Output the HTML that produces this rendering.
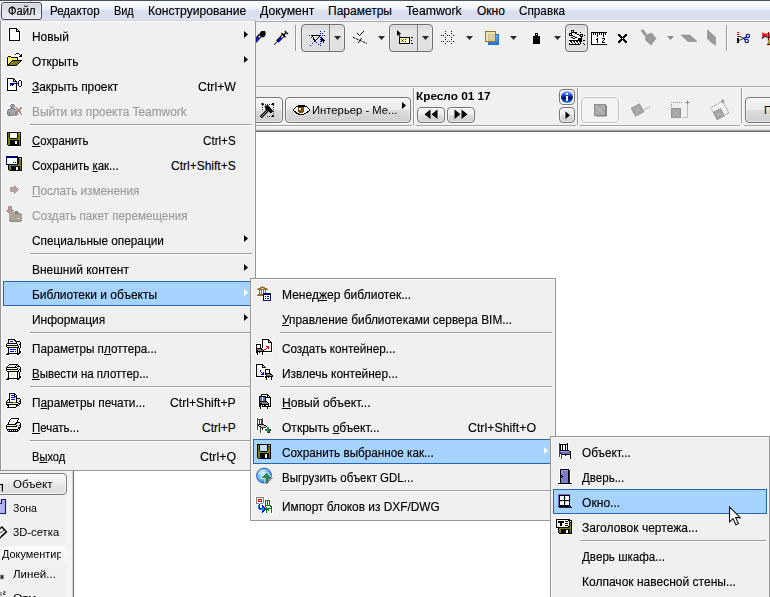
<!DOCTYPE html>
<html><head><meta charset="utf-8"><title>ArchiCAD</title>
<style>
*{box-sizing:border-box;margin:0;padding:0}
html,body{width:770px;height:597px;overflow:hidden}
body{position:relative;background:#f0f0f0;font-family:"Liberation Sans",sans-serif;font-size:12px;color:#000}
.abs{position:absolute}
.t{-webkit-text-stroke:0.15px currentColor;position:absolute;display:inline-block;white-space:nowrap;transform-origin:0 50%;line-height:27px;height:25px}
.t u{text-decoration:underline;text-underline-offset:1px}
.dis{color:#9a9a9a}
#topline{left:0;top:0;width:770px;height:1px;background:#44546a}
#menubar{left:0;top:1px;width:770px;height:20px;background:linear-gradient(#ffffff 0%,#fbfcfe 12%,#eef1f9 38%,#e3e7f4 46%,#d9deef 54%,#dbe0f0 100%)}
#menubar .t{line-height:20px;height:20px;top:0}
#filebtn{left:1px;top:2px;width:41px;height:18px;border:1px solid #454a55;border-radius:3px;background:linear-gradient(#d3d6df,#e2e4ec 60%,#e6e8ef);box-shadow:inset 0 0 0 1px rgba(255,255,255,.35)}
.menu{background:#f0f0f0;border:1px solid #979797;box-shadow:inset 1px 1px 0 #f8f8f8}
.sep{position:absolute;height:2px;background:#a0a0a0;border-bottom:1px solid #fbfbfb}
.hl{position:absolute;border:1px solid #2566b8;background:#a6d2fe}
.arr{position:absolute;width:4px;height:7px;background:#000;clip-path:polygon(0 0,100% 50%,0 100%)}
.arr.w{background:#fff}
.icon{position:absolute}
#canvas{left:74px;top:132px;width:696px;height:465px;background:#fff}
.tbtn{position:absolute;border:1px solid #767676;border-radius:4px;background:linear-gradient(#f4f4f4 0%,#ececec 48%,#dcdcdc 52%,#cecece 100%);box-shadow:inset 0 0 0 1px rgba(255,255,255,.55),0 1px 0 #fbfbfb}
.tah{font-size:11px;-webkit-text-stroke:0}
.halo{filter:drop-shadow(1px 0 0 #fff) drop-shadow(-1px 0 0 #fff) drop-shadow(0 1px 0 #fff) drop-shadow(0 -1px 0 #fff)}
.vsep{width:2px;border-left:1px solid #9a9a9a;border-right:1px solid #fbfbfb}
.tbtn2{position:absolute;border:1px solid #6f6f6f;border-radius:4px;background:linear-gradient(#d6d6d6 0%,#e7e7e7 25%,#e3e3e3 50%,#dcdcdc 100%);box-shadow:inset 0 0 0 1px rgba(255,255,255,.25)}
.darr{position:absolute;width:7px;height:4px;background:#2a2a2a;clip-path:polygon(0 0,100% 0,50% 100%)}

</style></head>
<body>
<div class="abs" id="topline"></div>
<div class="abs" id="menubar">
  <div class="abs" id="filebtn" style="top:1px"></div>
  <span class="t" style="transform:scaleX(0.9333);left:8px">Файл</span>
  <span class="t" style="transform:scaleX(0.9615);left:50px">Редактор</span>
  <span class="t" style="transform:scaleX(0.9091);left:114px">Вид</span>
  <span class="t" style="transform:scaleX(1.0103);left:148px">Конструирование</span>
  <span class="t" style="transform:scaleX(1.0189);left:260px">Документ</span>
  <span class="t" style="transform:scaleX(1.0000);left:328px">Параметры</span>
  <span class="t" style="transform:scaleX(1.0182);left:406px">Teamwork</span>
  <span class="t" style="transform:scaleX(1.0000);left:477px">Окно</span>
  <span class="t" style="transform:scaleX(0.9787);left:519px">Справка</span>
</div>
<div class="abs" id="tb1" style="left:0;top:22px;width:770px;height:106px;background:#f0f0f0"></div>
<div class="abs" style="left:256px;top:86px;width:514px;height:1px;background:#a6a6a6"></div>
<div class="abs" style="left:256px;top:87px;width:514px;height:1px;background:#fbfbfb"></div>
<div class="abs" style="left:256px;top:125px;width:514px;height:1px;background:#a6a6a6"></div>
<div class="abs" style="left:256px;top:126px;width:514px;height:1px;background:#fbfbfb"></div>
<div class="abs" style="left:0px;top:129px;width:770px;height:1px;background:#dadada"></div>
<div class="abs" style="left:0px;top:130px;width:770px;height:1px;background:#a6a6a6"></div>
<div class="abs" style="left:0px;top:131px;width:770px;height:1px;background:#6c6c6c"></div>
<div class="abs" id="canvas"></div>

<!-- toolbar row 1 buttons -->
<div class="abs" style="left:0;top:20px;width:770px;height:1px;background:#f6f7fb"></div>
<div class="abs" style="left:0;top:21px;width:770px;height:1px;background:#a9a9a9"></div>
<div class="abs vsep" style="left:295px;top:25px;height:26px"></div>
<div class="abs vsep" style="left:726px;top:25px;height:26px"></div>
<div class="tbtn2" style="left:301px;top:24px;width:44px;height:28px"></div>
<div class="abs" style="left:329px;top:25px;width:1px;height:26px;background:#7a7a7a"></div>
<div class="abs" style="left:330px;top:25px;width:1px;height:26px;background:#ececec"></div>
<div class="tbtn2" style="left:389px;top:24px;width:44px;height:28px"></div>
<div class="abs" style="left:417px;top:25px;width:1px;height:26px;background:#7a7a7a"></div>
<div class="abs" style="left:418px;top:25px;width:1px;height:26px;background:#ececec"></div>
<div class="tbtn2" style="left:565px;top:24px;width:23px;height:28px"></div>
<div class="darr" style="left:334px;top:36px"></div>
<div class="darr" style="left:378px;top:36px"></div>
<div class="darr" style="left:422px;top:36px"></div>
<div class="darr" style="left:466px;top:36px"></div>
<div class="darr" style="left:510px;top:36px"></div>
<div class="darr" style="left:554px;top:36px"></div>
<div class="darr" style="left:667px;top:36px;background:#8c8c8c"></div>
<!-- toolbar row 2 -->
<div class="tbtn" style="left:240px;top:97px;width:43px;height:26px"></div>
<div class="tbtn" style="left:285px;top:97px;width:126px;height:26px"></div>
<div class="arr" style="left:402px;top:102px"></div>
<div class="abs vsep" style="left:413px;top:88px;height:37px"></div>
<div class="abs vsep" style="left:577px;top:88px;height:37px"></div>
<div class="abs vsep" style="left:741px;top:88px;height:35px"></div>
<div class="tbtn" style="left:417px;top:107px;width:28px;height:16px"></div>
<div class="tbtn" style="left:447px;top:107px;width:28px;height:16px"></div>
<div class="tbtn" style="left:559px;top:89px;width:16px;height:16px;background:#f8f8f8"></div>
<div class="tbtn" style="left:559px;top:107px;width:16px;height:16px"></div>
<div class="abs" style="left:581px;top:97px;width:38px;height:26px;border:1px solid #bfc4cc;border-radius:4px;background:#f3f3f3;box-shadow:0 0 0 1px #fafafa"></div>
<div class="tbtn" style="left:745px;top:97px;width:40px;height:26px"></div>
<span class="t tah" style="transform:scaleX(1.0241);left:312px;top:97px;line-height:26px;height:26px;color:#000">Интерьер - Ме...</span>
<span class="t tah" style="transform:scaleX(1.0714);left:416px;top:86px;line-height:21px;height:20px;font-weight:bold">Кресло 01 17</span>
<span class="t tah" style="transform:scaleX(1.0000);left:764px;top:97px;line-height:26px;height:26px">П</span>
<svg class="abs" style="left:256px;top:22px" width="514" height="106" viewBox="256 22 514 106">
<!-- pipette -->
<g>
<path d="M259.5 33.5 l2 -2.5 l3.5 0 l0.8 3 l-1.5 3 l-2.5 0.5 z" fill="#000"/>
<path d="M260.5 35 L255 41.5" stroke="#000" stroke-width="4"/>
<path d="M260 36 L255.5 41" stroke="#fff" stroke-width="1.6"/>
<path d="M258.8 37.2 L255 41.5" stroke="#0000ff" stroke-width="1.8"/>
</g>
<!-- syringe -->
<g fill="none" stroke="#000" stroke-width="1">
<path d="M274 44.8 L277.5 41.5"/>
<path d="M277.3 41.6 L284 34.6" stroke-width="3.4"/>
<path d="M278 41 L281 37.8" stroke="#0000ff" stroke-width="1.8"/>
<path d="M281.3 37.6 L283.5 35.2" stroke="#fff" stroke-width="1.4"/>
<path d="M281.5 33 L285.5 37.5 M283.3 35.2 L286.5 32.3 M284.8 30.8 L288 34.2" stroke-width="1.2"/>
</g>
<!-- check / dashed line icon -->
<g fill="none" stroke="#000" stroke-width="1">
<path d="M357 33 L359.5 35.5 L364 31"/>
<path d="M353 37.3 L367 43.5" stroke-dasharray="2.5 1"/>
<path d="M358.3 42.8 L361.6 38.2"/>
</g>
<!-- button B icon -->
<g>
<path d="M397 30 l0 6 l1.4 -1.3 l1.1 2.2 l1 -0.5 l-1.1 -2.1 l1.9 -0.2 z" fill="#000"/>
<rect x="399.5" y="37.5" width="10" height="6" fill="#ffffc0" stroke="#000" stroke-width="1"/>
<path d="M401.5 39.5 l2 2 m0 -2 l-2 2 M405.5 39 v1 M405.5 41 v1" stroke="#000" stroke-width="0.9"/>
<path d="M411 37.5 h2 M411 40.5 h1 M411 43.5 h2" stroke="#000" stroke-width="1"/>
</g>
<!-- grid icon -->
<g fill="none" stroke="#0000c0" stroke-width="1" stroke-dasharray="1 1">
<path d="M445.5 31 V45 M451.5 31 V45 M441 35.5 H455 M441 41.5 H455"/>
</g>
<g fill="#e8e000"><rect x="445" y="35" width="1" height="1"/><rect x="451" y="35" width="1" height="1"/><rect x="445" y="41" width="1" height="1"/><rect x="451" y="41" width="1" height="1"/></g>
<!-- layers icon -->
<defs><linearGradient id="lb" x1="0" y1="0" x2="0" y2="1"><stop offset="0" stop-color="#6aaef0"/><stop offset="1" stop-color="#2a74d0"/></linearGradient></defs>
<rect x="488.5" y="34.5" width="10" height="10" fill="url(#lb)" stroke="#2a6cc0"/>
<rect x="485.5" y="31.5" width="10" height="10" fill="#f8dc90" fill-opacity="0.8" stroke="#9a7424"/>
<!-- gray icons -->
<g fill="#9a9a9e" stroke="#8c8c8c" stroke-width="0.6">
<path d="M645.5 35.5 L651.5 33 L656 38.5 L651 45 L645.5 40 Z"/>
<path d="M641 30.5 l2 -1 l3.5 4.5 l-2 1.5 z"/>
<path d="M681 35 L690 35 L697 41.5 L688 41.5 Z"/>
<path d="M707.5 30 L715.5 37 L715.5 45.5 L707.5 39 Z"/>
</g>
<!-- scissors icon -->
<g fill="none">
<rect x="737" y="32" width="2" height="1" fill="#ff0000"/><rect x="737" y="34" width="2" height="1" fill="#ff0000"/>
<rect x="737" y="38" width="2" height="5" fill="#000"/>
<path d="M737.3 36.4 L741 36.8 L744 38.6 M739 40.5 L744 38.2" stroke="#303030" stroke-width="1"/>
<path d="M743.5 38.4 L746.5 37.2 M743.5 38.4 L745.2 39.6" stroke="#000090" stroke-width="1.2"/>
<circle cx="747.8" cy="35.9" r="1.7" stroke="#000098" stroke-width="1.1"/><circle cx="746.7" cy="41" r="1.7" stroke="#000098" stroke-width="1.1"/>
</g>
<!-- red icon partially visible -->
<g>
<path d="M762.3 32.3 L765.5 34 L767.5 33 V36.5 L765.5 35.8 L762.3 37.2 Z" fill="#ff0000"/>
<path d="M768.5 32 V45" stroke="#8a0000" stroke-width="1.2"/>
<path d="M769.5 33 V38" stroke="#8a8a8a" stroke-width="1"/>
<path d="M762 38.6 Q764 36 766 36.6 L770 37.6" stroke="#000" stroke-width="1.1" fill="none"/>
<path d="M768.8 40 v3.5" stroke="#8a9a20" stroke-width="1.6"/>
<path d="M767 44.5 h3" stroke="#7a0000" stroke-width="1.2"/>
</g>
<!-- ROW 2 -->
<!-- hammer icon -->
<g>
<path d="M263 104.5 H273 M273.5 105 V116 M262.5 105 V111 M267 116.5 H273" fill="none" stroke="#3a3a3a" stroke-width="1" stroke-dasharray="1 1"/>
<rect x="261.5" y="103" width="2" height="2" fill="#000"/><rect x="272" y="103" width="2" height="2" fill="#000"/><rect x="272" y="115" width="2" height="2" fill="#000"/>
<path d="M260.8 117.2 L267.5 110.5" stroke="#000" stroke-width="3"/>
<path d="M261.2 116.8 L267 111" stroke="#a8a8a8" stroke-width="1"/>
<path d="M264.5 106 l3.5 -1 l5.3 6.2 l-2.6 2.4 l-3 -3.4 l-1.7 0.6 z" fill="#000"/>
</g>
<!-- nav arrows -->
<path d="M430.5 109.5 v9.5 l-6 -4.75 z M437.5 109.5 v9.5 l-6 -4.75 z" fill="#000"/>
<path d="M454.5 109.5 v9.5 l6 -4.75 z M461.5 109.5 v9.5 l6 -4.75 z" fill="#000"/>
<path d="M565.5 111.5 v7.5 l4.5 -3.75 z" fill="#000"/>
<!-- info icon -->
<defs><linearGradient id="ig" x1="0" y1="0" x2="0" y2="1"><stop offset="0" stop-color="#86b6fa"/><stop offset="0.32" stop-color="#2c58e2"/><stop offset="0.55" stop-color="#000c64"/><stop offset="0.8" stop-color="#0a3cbc"/><stop offset="1" stop-color="#3c94f2"/></linearGradient></defs>
<circle cx="567" cy="97" r="6" fill="url(#ig)"/>
<rect x="566" y="93" width="2" height="2" fill="#fff"/><rect x="566" y="96" width="2" height="5" fill="#fff"/>
<!-- disabled big button icon -->
<rect x="594.5" y="104.5" width="11" height="11" fill="#a9a9a9" stroke="#8e8e8e"/>
<path d="M596 106 l8 8 m0 -8 l-8 8" stroke="#c4c4c4" stroke-width="0.9"/>
<path d="M606.5 105.5 v10.5 h-10.5" stroke="#808080" fill="none"/>
<!-- gray rotated boxes -->
<g transform="rotate(-28 637.5 110)"><rect x="633" y="105.5" width="9" height="9" fill="#a4a4a4" stroke="#969696"/><path d="M634.5 107 l6 6 m0 -6 l-6 6" stroke="#b8b8b8" stroke-width="0.8"/><path d="M643 113 h7" stroke="#8a8a8a" stroke-dasharray="1 1"/></g>
<g><rect x="671.5" y="108.5" width="9" height="9" fill="#a4a4a4" stroke="#969696"/><path d="M673 110 l6 6 m0 -6 l-6 6" stroke="#b8b8b8" stroke-width="0.8"/>
<path d="M671.5 107 V102.5 H683 M687.5 105.5 V117.5 H682" fill="none" stroke="#8a8a8a" stroke-dasharray="1 1"/><path d="M685.5 102.5 h4 M687.5 100.5 v4" stroke="#8a8a8a"/></g>
<g transform="translate(0.8 1) rotate(-28 718 112)"><rect x="713.5" y="109" width="8" height="8" fill="#a4a4a4" stroke="#969696"/><path d="M715 110.5 l5 5 m0 -5 l-5 5" stroke="#b8b8b8" stroke-width="0.8"/>
<path d="M713.5 108 V103.5 H727 V116.5 H723" fill="none" stroke="#8a8a8a" stroke-dasharray="1 1"/><path d="M725 103.5 h4 M727 101.5 v4" stroke="#8a8a8a"/></g>
</svg>

<svg class="icon" style="left:308px;top:30px" width="17" height="16" viewBox="0 0 17 16" shape-rendering="crispEdges"><rect x="12" y="1" width="1" height="1" fill="#0000ff"/><rect x="16" y="1" width="1" height="1" fill="#0000ff"/><rect x="12" y="3" width="1" height="1" fill="#0000ff"/><rect x="14" y="3" width="1" height="1" fill="#0000ff"/><rect x="1" y="5" width="1" height="1" fill="#0000ff"/><rect x="3" y="5" width="1" height="1" fill="#0000ff"/><rect x="4" y="5" width="9" height="1" fill="#000000"/><rect x="14" y="5" width="1" height="1" fill="#0000ff"/><rect x="16" y="5" width="1" height="1" fill="#0000ff"/><rect x="4" y="6" width="1" height="1" fill="#000000"/><rect x="11" y="6" width="1" height="1" fill="#000000"/><rect x="3" y="7" width="1" height="1" fill="#0000ff"/><rect x="5" y="7" width="1" height="1" fill="#000000"/><rect x="10" y="7" width="1" height="1" fill="#000000"/><rect x="12" y="7" width="1" height="1" fill="#0000ff"/><rect x="13" y="7" width="1" height="1" fill="#000000"/><rect x="5" y="8" width="1" height="1" fill="#000000"/><rect x="9" y="8" width="1" height="1" fill="#000000"/><rect x="13" y="8" width="2" height="1" fill="#000000"/><rect x="5" y="9" width="1" height="1" fill="#0000ff"/><rect x="6" y="9" width="1" height="1" fill="#000000"/><rect x="8" y="9" width="1" height="1" fill="#000000"/><rect x="12" y="9" width="1" height="1" fill="#0000ff"/><rect x="13" y="9" width="3" height="1" fill="#000000"/><rect x="6" y="10" width="2" height="1" fill="#000000"/><rect x="13" y="10" width="4" height="1" fill="#000000"/><rect x="6" y="11" width="2" height="1" fill="#0000ff"/><rect x="12" y="11" width="1" height="1" fill="#0000ff"/><rect x="13" y="11" width="1" height="1" fill="#000000"/><rect x="15" y="11" width="1" height="1" fill="#000000"/><rect x="8" y="12" width="1" height="1" fill="#0000ff"/><rect x="15" y="12" width="1" height="1" fill="#000000"/><rect x="4" y="13" width="1" height="1" fill="#0000ff"/><rect x="12" y="13" width="1" height="1" fill="#0000ff"/><rect x="10" y="14" width="1" height="1" fill="#0000ff"/><rect x="2" y="15" width="1" height="1" fill="#0000ff"/><rect x="12" y="15" width="1" height="1" fill="#0000ff"/></svg>
<svg class="icon" style="left:618px;top:34px" width="9" height="9" viewBox="0 0 9 9" shape-rendering="crispEdges"><rect x="0" y="0" width="2" height="1" fill="#000000"/><rect x="7" y="0" width="2" height="1" fill="#000000"/><rect x="0" y="1" width="3" height="1" fill="#000000"/><rect x="6" y="1" width="3" height="1" fill="#000000"/><rect x="1" y="2" width="3" height="1" fill="#000000"/><rect x="5" y="2" width="3" height="1" fill="#000000"/><rect x="2" y="3" width="5" height="1" fill="#000000"/><rect x="3" y="4" width="1" height="1" fill="#000000"/><rect x="5" y="4" width="1" height="1" fill="#000000"/><rect x="2" y="5" width="5" height="1" fill="#000000"/><rect x="1" y="6" width="3" height="1" fill="#000000"/><rect x="5" y="6" width="3" height="1" fill="#000000"/><rect x="0" y="7" width="3" height="1" fill="#000000"/><rect x="6" y="7" width="3" height="1" fill="#000000"/><rect x="0" y="8" width="2" height="1" fill="#000000"/><rect x="7" y="8" width="2" height="1" fill="#000000"/></svg>
<svg class="icon" style="left:533px;top:33px" width="7" height="11" viewBox="0 0 7 11" shape-rendering="crispEdges"><rect x="2" y="0" width="3" height="1" fill="#000000"/><rect x="2" y="1" width="1" height="1" fill="#000000"/><rect x="4" y="1" width="1" height="1" fill="#000000"/><rect x="2" y="2" width="3" height="1" fill="#000000"/><rect x="0" y="3" width="7" height="1" fill="#000000"/><rect x="0" y="4" width="7" height="1" fill="#000000"/><rect x="0" y="5" width="7" height="1" fill="#000000"/><rect x="0" y="6" width="7" height="1" fill="#000000"/><rect x="0" y="7" width="7" height="1" fill="#000000"/><rect x="0" y="8" width="7" height="1" fill="#000000"/><rect x="0" y="9" width="7" height="1" fill="#000000"/><rect x="0" y="10" width="7" height="1" fill="#000000"/></svg>
<svg class="icon" style="left:566px;top:28px" width="22" height="17" viewBox="0 0 22 17" shape-rendering="crispEdges"><rect x="5" y="2" width="3" height="1" fill="#000000"/><rect x="5" y="3" width="1" height="1" fill="#000000"/><rect x="6" y="3" width="1" height="1" fill="#ffffff"/><rect x="7" y="3" width="1" height="1" fill="#000000"/><rect x="5" y="4" width="6" height="1" fill="#000000"/><rect x="14" y="4" width="1" height="1" fill="#000000"/><rect x="3" y="5" width="3" height="1" fill="#000000"/><rect x="6" y="5" width="3" height="1" fill="#ffffff"/><rect x="9" y="5" width="2" height="1" fill="#000000"/><rect x="3" y="6" width="1" height="1" fill="#000000"/><rect x="4" y="6" width="1" height="1" fill="#ffffff"/><rect x="5" y="6" width="1" height="1" fill="#000000"/><rect x="6" y="6" width="5" height="1" fill="#ffffff"/><rect x="11" y="6" width="2" height="1" fill="#000000"/><rect x="14" y="6" width="3" height="1" fill="#000000"/><rect x="3" y="7" width="4" height="1" fill="#000000"/><rect x="7" y="7" width="6" height="1" fill="#ffffff"/><rect x="13" y="7" width="2" height="1" fill="#000000"/><rect x="15" y="7" width="1" height="1" fill="#ffffff"/><rect x="16" y="7" width="1" height="1" fill="#000000"/><rect x="18" y="7" width="1" height="1" fill="#000000"/><rect x="7" y="8" width="2" height="1" fill="#000000"/><rect x="9" y="8" width="5" height="1" fill="#ffffff"/><rect x="14" y="8" width="3" height="1" fill="#000000"/><rect x="5" y="9" width="2" height="1" fill="#000000"/><rect x="9" y="9" width="2" height="1" fill="#000000"/><rect x="11" y="9" width="4" height="1" fill="#ffffff"/><rect x="15" y="9" width="1" height="1" fill="#000000"/><rect x="7" y="10" width="2" height="1" fill="#000000"/><rect x="12" y="10" width="4" height="1" fill="#000000"/><rect x="3" y="11" width="9" height="1" fill="#ffffff"/><rect x="12" y="11" width="4" height="1" fill="#000000"/><rect x="3" y="12" width="13" height="1" fill="#000000"/><rect x="17" y="12" width="2" height="1" fill="#000000"/><rect x="3" y="13" width="1" height="1" fill="#ffffff"/><rect x="4" y="13" width="2" height="1" fill="#000000"/><rect x="6" y="13" width="1" height="1" fill="#ffffff"/><rect x="7" y="13" width="2" height="1" fill="#000000"/><rect x="9" y="13" width="1" height="1" fill="#ffffff"/><rect x="10" y="13" width="2" height="1" fill="#000000"/><rect x="12" y="13" width="1" height="1" fill="#ffffff"/><rect x="13" y="13" width="3" height="1" fill="#000000"/><rect x="3" y="14" width="2" height="1" fill="#ffffff"/><rect x="5" y="14" width="1" height="1" fill="#000000"/><rect x="6" y="14" width="2" height="1" fill="#ffffff"/><rect x="8" y="14" width="1" height="1" fill="#000000"/><rect x="9" y="14" width="2" height="1" fill="#ffffff"/><rect x="11" y="14" width="1" height="1" fill="#000000"/><rect x="12" y="14" width="2" height="1" fill="#ffffff"/><rect x="14" y="14" width="1" height="1" fill="#000000"/><rect x="3" y="15" width="1" height="1" fill="#000000"/><rect x="4" y="15" width="2" height="1" fill="#ffffff"/><rect x="6" y="15" width="1" height="1" fill="#000000"/><rect x="7" y="15" width="2" height="1" fill="#ffffff"/><rect x="9" y="15" width="1" height="1" fill="#000000"/><rect x="10" y="15" width="2" height="1" fill="#ffffff"/><rect x="12" y="15" width="1" height="1" fill="#000000"/><rect x="13" y="15" width="1" height="1" fill="#ffffff"/><rect x="14" y="15" width="1" height="1" fill="#000000"/><rect x="17" y="15" width="1" height="1" fill="#000000"/><rect x="3" y="16" width="11" height="1" fill="#000000"/><rect x="18" y="16" width="1" height="1" fill="#000000"/></svg>
<svg class="icon" style="left:591px;top:32px" width="16" height="13" viewBox="0 0 16 13" shape-rendering="crispEdges"><rect x="0" y="0" width="16" height="1" fill="#000000"/><rect x="0" y="1" width="1" height="1" fill="#000000"/><rect x="1" y="1" width="1" height="1" fill="#ffffff"/><rect x="2" y="1" width="1" height="1" fill="#000000"/><rect x="3" y="1" width="1" height="1" fill="#ffffff"/><rect x="4" y="1" width="1" height="1" fill="#000000"/><rect x="5" y="1" width="1" height="1" fill="#ffffff"/><rect x="6" y="1" width="1" height="1" fill="#000000"/><rect x="7" y="1" width="1" height="1" fill="#ffffff"/><rect x="8" y="1" width="1" height="1" fill="#000000"/><rect x="9" y="1" width="1" height="1" fill="#ffffff"/><rect x="10" y="1" width="1" height="1" fill="#000000"/><rect x="11" y="1" width="1" height="1" fill="#ffffff"/><rect x="12" y="1" width="1" height="1" fill="#000000"/><rect x="13" y="1" width="1" height="1" fill="#ffffff"/><rect x="14" y="1" width="1" height="1" fill="#000000"/><rect x="15" y="1" width="1" height="1" fill="#ffffff"/><rect x="0" y="2" width="1" height="1" fill="#000000"/><rect x="1" y="2" width="1" height="1" fill="#ffffff"/><rect x="2" y="2" width="1" height="1" fill="#000000"/><rect x="3" y="2" width="1" height="1" fill="#ffffff"/><rect x="4" y="2" width="1" height="1" fill="#000000"/><rect x="5" y="2" width="1" height="1" fill="#ffffff"/><rect x="6" y="2" width="1" height="1" fill="#000000"/><rect x="7" y="2" width="1" height="1" fill="#ffffff"/><rect x="8" y="2" width="1" height="1" fill="#000000"/><rect x="9" y="2" width="1" height="1" fill="#ffffff"/><rect x="10" y="2" width="1" height="1" fill="#000000"/><rect x="11" y="2" width="1" height="1" fill="#ffffff"/><rect x="12" y="2" width="1" height="1" fill="#000000"/><rect x="13" y="2" width="1" height="1" fill="#ffffff"/><rect x="14" y="2" width="1" height="1" fill="#000000"/><rect x="15" y="2" width="1" height="1" fill="#ffffff"/><rect x="0" y="3" width="1" height="1" fill="#000000"/><rect x="1" y="3" width="5" height="1" fill="#ffffff"/><rect x="6" y="3" width="1" height="1" fill="#000000"/><rect x="7" y="3" width="5" height="1" fill="#ffffff"/><rect x="12" y="3" width="1" height="1" fill="#000000"/><rect x="13" y="3" width="3" height="1" fill="#ffffff"/><rect x="0" y="4" width="1" height="1" fill="#000000"/><rect x="1" y="4" width="5" height="1" fill="#ffffff"/><rect x="6" y="4" width="1" height="1" fill="#000000"/><rect x="7" y="4" width="5" height="1" fill="#ffffff"/><rect x="12" y="4" width="1" height="1" fill="#000000"/><rect x="13" y="4" width="3" height="1" fill="#ffffff"/><rect x="0" y="5" width="1" height="1" fill="#000000"/><rect x="1" y="5" width="15" height="1" fill="#ffffff"/><rect x="0" y="6" width="1" height="1" fill="#000000"/><rect x="1" y="6" width="5" height="1" fill="#ffffff"/><rect x="6" y="6" width="1" height="1" fill="#000000"/><rect x="7" y="6" width="4" height="1" fill="#ffffff"/><rect x="11" y="6" width="3" height="1" fill="#000000"/><rect x="14" y="6" width="2" height="1" fill="#ffffff"/><rect x="0" y="7" width="1" height="1" fill="#000000"/><rect x="1" y="7" width="4" height="1" fill="#ffffff"/><rect x="5" y="7" width="2" height="1" fill="#000000"/><rect x="7" y="7" width="6" height="1" fill="#ffffff"/><rect x="13" y="7" width="1" height="1" fill="#000000"/><rect x="14" y="7" width="2" height="1" fill="#ffffff"/><rect x="0" y="8" width="1" height="1" fill="#000000"/><rect x="1" y="8" width="5" height="1" fill="#ffffff"/><rect x="6" y="8" width="1" height="1" fill="#000000"/><rect x="7" y="8" width="5" height="1" fill="#ffffff"/><rect x="12" y="8" width="1" height="1" fill="#000000"/><rect x="13" y="8" width="3" height="1" fill="#ffffff"/><rect x="0" y="9" width="1" height="1" fill="#000000"/><rect x="1" y="9" width="5" height="1" fill="#ffffff"/><rect x="6" y="9" width="1" height="1" fill="#000000"/><rect x="7" y="9" width="4" height="1" fill="#ffffff"/><rect x="11" y="9" width="1" height="1" fill="#000000"/><rect x="12" y="9" width="4" height="1" fill="#ffffff"/><rect x="0" y="10" width="1" height="1" fill="#000000"/><rect x="1" y="10" width="5" height="1" fill="#ffffff"/><rect x="6" y="10" width="1" height="1" fill="#000000"/><rect x="7" y="10" width="4" height="1" fill="#ffffff"/><rect x="11" y="10" width="3" height="1" fill="#000000"/><rect x="14" y="10" width="2" height="1" fill="#ffffff"/><rect x="0" y="11" width="1" height="1" fill="#000000"/><rect x="1" y="11" width="15" height="1" fill="#ffffff"/><rect x="0" y="12" width="16" height="1" fill="#000000"/></svg>
<svg class="icon" style="left:293px;top:105px" width="17" height="10" viewBox="0 0 17 10" shape-rendering="crispEdges"><rect x="5" y="0" width="7" height="1" fill="#000000"/><rect x="3" y="1" width="11" height="1" fill="#000000"/><rect x="2" y="2" width="1" height="1" fill="#000000"/><rect x="3" y="2" width="2" height="1" fill="#ffffff"/><rect x="5" y="2" width="6" height="1" fill="#7a4a08"/><rect x="11" y="2" width="3" height="1" fill="#ffffff"/><rect x="14" y="2" width="1" height="1" fill="#000000"/><rect x="1" y="3" width="1" height="1" fill="#000000"/><rect x="2" y="3" width="3" height="1" fill="#ffffff"/><rect x="5" y="3" width="1" height="1" fill="#7a4a08"/><rect x="6" y="3" width="2" height="1" fill="#ffffff"/><rect x="8" y="3" width="3" height="1" fill="#7a4a08"/><rect x="11" y="3" width="4" height="1" fill="#ffffff"/><rect x="15" y="3" width="1" height="1" fill="#000000"/><rect x="0" y="4" width="1" height="1" fill="#000000"/><rect x="1" y="4" width="4" height="1" fill="#ffffff"/><rect x="5" y="4" width="1" height="1" fill="#7a4a08"/><rect x="6" y="4" width="2" height="1" fill="#ffffff"/><rect x="8" y="4" width="3" height="1" fill="#7a4a08"/><rect x="11" y="4" width="5" height="1" fill="#ffffff"/><rect x="16" y="4" width="1" height="1" fill="#000000"/><rect x="0" y="5" width="1" height="1" fill="#000000"/><rect x="1" y="5" width="4" height="1" fill="#ffffff"/><rect x="5" y="5" width="6" height="1" fill="#7a4a08"/><rect x="11" y="5" width="5" height="1" fill="#ffffff"/><rect x="16" y="5" width="1" height="1" fill="#000000"/><rect x="1" y="6" width="2" height="1" fill="#000000"/><rect x="3" y="6" width="2" height="1" fill="#ffffff"/><rect x="5" y="6" width="6" height="1" fill="#7a4a08"/><rect x="11" y="6" width="3" height="1" fill="#ffffff"/><rect x="14" y="6" width="2" height="1" fill="#000000"/><rect x="2" y="7" width="2" height="1" fill="#000000"/><rect x="4" y="7" width="2" height="1" fill="#ffffff"/><rect x="6" y="7" width="4" height="1" fill="#7a4a08"/><rect x="10" y="7" width="3" height="1" fill="#ffffff"/><rect x="13" y="7" width="2" height="1" fill="#000000"/><rect x="3" y="8" width="3" height="1" fill="#000000"/><rect x="6" y="8" width="5" height="1" fill="#ffffff"/><rect x="11" y="8" width="2" height="1" fill="#000000"/><rect x="5" y="9" width="6" height="1" fill="#000000"/></svg>

<div class="abs" style="left:412px;top:125px;width:4px;height:2px;background:#f2f2f2"></div>
<div class="abs" style="left:576px;top:125px;width:4px;height:2px;background:#f2f2f2"></div>
<div class="abs" style="left:740px;top:125px;width:4px;height:2px;background:#f2f2f2"></div>

<!-- left toolbox -->
<div class="abs" style="left:0;top:132px;width:73px;height:465px;background:#f0f0f0"></div>
<div class="abs" style="left:67px;top:471px;width:5px;height:126px;background:#f4f4f4"></div>
<div class="abs" style="left:73px;top:132px;width:1px;height:465px;background:#6a6a6a"></div>
<div class="abs" style="left:72px;top:132px;width:1px;height:465px;background:#d8d8d8"></div>
<div class="abs" style="left:-6px;top:473px;width:73px;height:22px;border:1px solid #7c7c7c;border-radius:4px;background:linear-gradient(#f7f7f7 0%,#f0f0f0 45%,#e4e4e4 55%,#dedede 100%);box-shadow:inset 0 0 0 1px rgba(255,255,255,.6)"></div>
<div class="abs" style="left:0;top:546px;width:67px;height:16px;background:linear-gradient(#fbfbfb,#f3f3f3)"></div>
<span class="t tah" style="transform:scaleX(1.0541);left:13px;top:473px;line-height:22px;height:22px">Объект</span>
<span class="t tah" style="transform:scaleX(0.9600);left:13px;top:497px;line-height:22px;height:22px">Зона</span>
<span class="t tah" style="transform:scaleX(1.0222);left:13px;top:521px;line-height:22px;height:22px">3D-сетка</span>
<div class="abs" style="left:0;top:543px;width:61px;height:22px;overflow:hidden"><span class="t tah" style="transform:scaleX(0.9897);left:2px;top:0;line-height:22px;height:22px">Документирование</span></div>
<span class="t tah" style="transform:scaleX(1.0488);left:13px;top:563px;line-height:22px;height:22px">Линей...</span>
<span class="t tah" style="transform:scaleX(1.1000);left:13px;top:587px;line-height:22px;height:22px">Отм...</span>
<svg class="abs" style="left:0;top:470px" width="12" height="127" viewBox="0 470 12 127">
<path d="M0 484.5 H2.4 V491.5" stroke="#000" stroke-width="1.2" fill="none"/>
<path d="M-2 503.5 H1.5 V499.5 H5.5 V513.5 H-2 Z" fill="#b4b4f4" stroke="#1a1a80" stroke-width="1.2"/>
<path d="M-3 531 L2 527 L6.5 532 L0 538 L-3 536 Z" fill="#fff" stroke="#000" stroke-width="1.3"/>
<path d="M-1 534 L4 530 M1 536 L5.5 532" stroke="#000" stroke-width="0.8"/>
<path d="M0 577 h4 M2 574.5 v5 M0.5 575 l3 4 M3.5 575 l-3 4" stroke="#202020" stroke-width="0.9"/>
<path d="M1 592 v4 M3.5 591.5 h1.5 v1.5 h-1.5 v1.5 h2" stroke="#202020" stroke-width="0.8" fill="none"/>
</svg>

<!-- FILE MENU -->
<div class="abs menu" id="m1" style="left:0;top:20px;width:256px;height:451px;border-top-color:#d6d7dc"></div>
<div class="hl" style="left:3px;top:281px;width:249px;height:25px"></div>
<div class="sep" style="left:30px;top:124px;width:222px"></div>
<div class="sep" style="left:30px;top:253px;width:222px"></div>
<div class="sep" style="left:30px;top:332px;width:222px"></div>
<div class="sep" style="left:30px;top:386px;width:222px"></div>
<div class="sep" style="left:30px;top:440px;width:222px"></div>
<div class="arr" style="left:244px;top:31px"></div>
<div class="arr" style="left:244px;top:56px"></div>
<div class="arr" style="left:244px;top:235px"></div>
<div class="arr" style="left:244px;top:264px"></div>
<div class="arr w" style="left:244px;top:289px"></div>
<div class="arr" style="left:244px;top:314px"></div>
<svg class="icon halo" style="left:9px;top:28px" width="11" height="13" viewBox="0 0 11 13" shape-rendering="crispEdges"><rect x="0" y="0" width="8" height="1" fill="#000000"/><rect x="0" y="1" width="1" height="1" fill="#000000"/><rect x="1" y="1" width="6" height="1" fill="#ffffff"/><rect x="7" y="1" width="2" height="1" fill="#000000"/><rect x="0" y="2" width="1" height="1" fill="#000000"/><rect x="1" y="2" width="6" height="1" fill="#ffffff"/><rect x="7" y="2" width="1" height="1" fill="#000000"/><rect x="8" y="2" width="1" height="1" fill="#ffffff"/><rect x="9" y="2" width="1" height="1" fill="#000000"/><rect x="0" y="3" width="1" height="1" fill="#000000"/><rect x="1" y="3" width="6" height="1" fill="#ffffff"/><rect x="7" y="3" width="4" height="1" fill="#000000"/><rect x="0" y="4" width="1" height="1" fill="#000000"/><rect x="1" y="4" width="9" height="1" fill="#ffffff"/><rect x="10" y="4" width="1" height="1" fill="#000000"/><rect x="0" y="5" width="1" height="1" fill="#000000"/><rect x="1" y="5" width="9" height="1" fill="#ffffff"/><rect x="10" y="5" width="1" height="1" fill="#000000"/><rect x="0" y="6" width="1" height="1" fill="#000000"/><rect x="1" y="6" width="9" height="1" fill="#ffffff"/><rect x="10" y="6" width="1" height="1" fill="#000000"/><rect x="0" y="7" width="1" height="1" fill="#000000"/><rect x="1" y="7" width="9" height="1" fill="#ffffff"/><rect x="10" y="7" width="1" height="1" fill="#000000"/><rect x="0" y="8" width="1" height="1" fill="#000000"/><rect x="1" y="8" width="9" height="1" fill="#ffffff"/><rect x="10" y="8" width="1" height="1" fill="#000000"/><rect x="0" y="9" width="1" height="1" fill="#000000"/><rect x="1" y="9" width="9" height="1" fill="#ffffff"/><rect x="10" y="9" width="1" height="1" fill="#000000"/><rect x="0" y="10" width="1" height="1" fill="#000000"/><rect x="1" y="10" width="9" height="1" fill="#ffffff"/><rect x="10" y="10" width="1" height="1" fill="#000000"/><rect x="0" y="11" width="1" height="1" fill="#000000"/><rect x="1" y="11" width="9" height="1" fill="#ffffff"/><rect x="10" y="11" width="1" height="1" fill="#000000"/><rect x="0" y="12" width="11" height="1" fill="#000000"/></svg>
<svg class="icon halo" style="left:6px;top:51px" width="16" height="15" viewBox="0 0 16 15" shape-rendering="crispEdges"><rect x="10" y="2" width="3" height="1" fill="#000000"/><rect x="9" y="3" width="1" height="1" fill="#000000"/><rect x="13" y="3" width="1" height="1" fill="#000000"/><rect x="15" y="3" width="1" height="1" fill="#000000"/><rect x="14" y="4" width="2" height="1" fill="#000000"/><rect x="2" y="5" width="3" height="1" fill="#000000"/><rect x="13" y="5" width="3" height="1" fill="#000000"/><rect x="1" y="6" width="1" height="1" fill="#000000"/><rect x="2" y="6" width="3" height="1" fill="#ffff00"/><rect x="5" y="6" width="7" height="1" fill="#000000"/><rect x="1" y="7" width="1" height="1" fill="#000000"/><rect x="2" y="7" width="1" height="1" fill="#ffff00"/><rect x="3" y="7" width="1" height="1" fill="#ffffff"/><rect x="4" y="7" width="1" height="1" fill="#ffff00"/><rect x="5" y="7" width="1" height="1" fill="#ffffff"/><rect x="6" y="7" width="1" height="1" fill="#ffff00"/><rect x="7" y="7" width="1" height="1" fill="#ffffff"/><rect x="8" y="7" width="1" height="1" fill="#ffff00"/><rect x="9" y="7" width="1" height="1" fill="#ffffff"/><rect x="10" y="7" width="1" height="1" fill="#ffff00"/><rect x="11" y="7" width="1" height="1" fill="#000000"/><rect x="1" y="8" width="1" height="1" fill="#000000"/><rect x="2" y="8" width="1" height="1" fill="#ffffff"/><rect x="3" y="8" width="1" height="1" fill="#ffff00"/><rect x="4" y="8" width="1" height="1" fill="#ffffff"/><rect x="5" y="8" width="1" height="1" fill="#ffff00"/><rect x="6" y="8" width="1" height="1" fill="#ffffff"/><rect x="7" y="8" width="1" height="1" fill="#ffff00"/><rect x="8" y="8" width="1" height="1" fill="#ffffff"/><rect x="9" y="8" width="1" height="1" fill="#ffff00"/><rect x="10" y="8" width="1" height="1" fill="#ffffff"/><rect x="11" y="8" width="1" height="1" fill="#000000"/><rect x="1" y="9" width="1" height="1" fill="#000000"/><rect x="2" y="9" width="1" height="1" fill="#ffff00"/><rect x="3" y="9" width="1" height="1" fill="#ffffff"/><rect x="4" y="9" width="1" height="1" fill="#ffff00"/><rect x="5" y="9" width="1" height="1" fill="#ffffff"/><rect x="6" y="9" width="10" height="1" fill="#000000"/><rect x="1" y="10" width="1" height="1" fill="#000000"/><rect x="2" y="10" width="1" height="1" fill="#ffffff"/><rect x="3" y="10" width="1" height="1" fill="#ffff00"/><rect x="4" y="10" width="1" height="1" fill="#ffffff"/><rect x="5" y="10" width="1" height="1" fill="#000000"/><rect x="6" y="10" width="8" height="1" fill="#808000"/><rect x="14" y="10" width="1" height="1" fill="#000000"/><rect x="1" y="11" width="1" height="1" fill="#000000"/><rect x="2" y="11" width="1" height="1" fill="#ffff00"/><rect x="3" y="11" width="1" height="1" fill="#ffffff"/><rect x="4" y="11" width="1" height="1" fill="#000000"/><rect x="5" y="11" width="8" height="1" fill="#808000"/><rect x="13" y="11" width="1" height="1" fill="#000000"/><rect x="1" y="12" width="1" height="1" fill="#000000"/><rect x="2" y="12" width="1" height="1" fill="#ffffff"/><rect x="3" y="12" width="1" height="1" fill="#000000"/><rect x="4" y="12" width="8" height="1" fill="#808000"/><rect x="12" y="12" width="1" height="1" fill="#000000"/><rect x="1" y="13" width="2" height="1" fill="#000000"/><rect x="3" y="13" width="8" height="1" fill="#808000"/><rect x="11" y="13" width="1" height="1" fill="#000000"/><rect x="1" y="14" width="10" height="1" fill="#000000"/></svg>
<svg class="icon halo" style="left:6px;top:76px" width="16" height="15" viewBox="0 0 16 15" shape-rendering="crispEdges"><rect x="1" y="2" width="7" height="1" fill="#000000"/><rect x="1" y="3" width="1" height="1" fill="#000000"/><rect x="2" y="3" width="5" height="1" fill="#ffffff"/><rect x="7" y="3" width="2" height="1" fill="#000000"/><rect x="1" y="4" width="1" height="1" fill="#000000"/><rect x="2" y="4" width="5" height="1" fill="#ffffff"/><rect x="7" y="4" width="1" height="1" fill="#000000"/><rect x="8" y="4" width="1" height="1" fill="#ffffff"/><rect x="9" y="4" width="1" height="1" fill="#000000"/><rect x="13" y="4" width="2" height="1" fill="#000080"/><rect x="1" y="5" width="1" height="1" fill="#000000"/><rect x="2" y="5" width="5" height="1" fill="#ffffff"/><rect x="7" y="5" width="4" height="1" fill="#000000"/><rect x="12" y="5" width="1" height="1" fill="#000080"/><rect x="15" y="5" width="1" height="1" fill="#000080"/><rect x="1" y="6" width="1" height="1" fill="#000000"/><rect x="2" y="6" width="8" height="1" fill="#ffffff"/><rect x="10" y="6" width="1" height="1" fill="#000000"/><rect x="12" y="6" width="1" height="1" fill="#000080"/><rect x="15" y="6" width="1" height="1" fill="#000080"/><rect x="1" y="7" width="1" height="1" fill="#000000"/><rect x="2" y="7" width="2" height="1" fill="#ffffff"/><rect x="4" y="7" width="9" height="1" fill="#000080"/><rect x="15" y="7" width="1" height="1" fill="#000080"/><rect x="1" y="8" width="1" height="1" fill="#000000"/><rect x="2" y="8" width="2" height="1" fill="#ffffff"/><rect x="4" y="8" width="4" height="1" fill="#000080"/><rect x="8" y="8" width="2" height="1" fill="#ffffff"/><rect x="10" y="8" width="1" height="1" fill="#000000"/><rect x="12" y="8" width="1" height="1" fill="#000080"/><rect x="15" y="8" width="1" height="1" fill="#000080"/><rect x="1" y="9" width="1" height="1" fill="#000000"/><rect x="2" y="9" width="2" height="1" fill="#ffffff"/><rect x="4" y="9" width="1" height="1" fill="#000080"/><rect x="5" y="9" width="1" height="1" fill="#ffffff"/><rect x="6" y="9" width="1" height="1" fill="#000080"/><rect x="7" y="9" width="3" height="1" fill="#ffffff"/><rect x="10" y="9" width="1" height="1" fill="#000000"/><rect x="12" y="9" width="1" height="1" fill="#000080"/><rect x="15" y="9" width="1" height="1" fill="#000080"/><rect x="1" y="10" width="1" height="1" fill="#000000"/><rect x="2" y="10" width="8" height="1" fill="#ffffff"/><rect x="10" y="10" width="1" height="1" fill="#000000"/><rect x="13" y="10" width="2" height="1" fill="#000080"/><rect x="1" y="11" width="1" height="1" fill="#000000"/><rect x="2" y="11" width="8" height="1" fill="#ffffff"/><rect x="10" y="11" width="1" height="1" fill="#000000"/><rect x="1" y="12" width="1" height="1" fill="#000000"/><rect x="2" y="12" width="8" height="1" fill="#ffffff"/><rect x="10" y="12" width="1" height="1" fill="#000000"/><rect x="1" y="13" width="1" height="1" fill="#000000"/><rect x="2" y="13" width="8" height="1" fill="#ffffff"/><rect x="10" y="13" width="1" height="1" fill="#000000"/><rect x="1" y="14" width="10" height="1" fill="#000000"/></svg>
<svg class="icon halo" style="left:6px;top:101px" width="16" height="15" viewBox="0 0 16 15" shape-rendering="crispEdges"><rect x="5" y="3" width="3" height="1" fill="#7e7e84"/><rect x="4" y="4" width="1" height="1" fill="#7e7e84"/><rect x="5" y="4" width="3" height="1" fill="#a3a3ad"/><rect x="8" y="4" width="1" height="1" fill="#7e7e84"/><rect x="4" y="5" width="1" height="1" fill="#7e7e84"/><rect x="5" y="5" width="3" height="1" fill="#a3a3ad"/><rect x="8" y="5" width="1" height="1" fill="#7e7e84"/><rect x="5" y="6" width="1" height="1" fill="#7e7e84"/><rect x="6" y="6" width="1" height="1" fill="#a3a3ad"/><rect x="7" y="6" width="1" height="1" fill="#7e7e84"/><rect x="9" y="6" width="2" height="1" fill="#b58a88"/><rect x="14" y="6" width="2" height="1" fill="#b58a88"/><rect x="4" y="7" width="5" height="1" fill="#7e7e84"/><rect x="10" y="7" width="2" height="1" fill="#b58a88"/><rect x="13" y="7" width="3" height="1" fill="#b58a88"/><rect x="2" y="8" width="2" height="1" fill="#7e7e84"/><rect x="4" y="8" width="5" height="1" fill="#a3a3ad"/><rect x="9" y="8" width="1" height="1" fill="#7e7e84"/><rect x="11" y="8" width="4" height="1" fill="#b58a88"/><rect x="1" y="9" width="1" height="1" fill="#7e7e84"/><rect x="2" y="9" width="8" height="1" fill="#a3a3ad"/><rect x="10" y="9" width="1" height="1" fill="#7e7e84"/><rect x="11" y="9" width="3" height="1" fill="#b58a88"/><rect x="1" y="10" width="1" height="1" fill="#7e7e84"/><rect x="2" y="10" width="8" height="1" fill="#a3a3ad"/><rect x="10" y="10" width="5" height="1" fill="#b58a88"/><rect x="1" y="11" width="1" height="1" fill="#7e7e84"/><rect x="2" y="11" width="1" height="1" fill="#a3a3ad"/><rect x="3" y="11" width="1" height="1" fill="#7e7e84"/><rect x="4" y="11" width="5" height="1" fill="#a3a3ad"/><rect x="9" y="11" width="2" height="1" fill="#b58a88"/><rect x="11" y="11" width="1" height="1" fill="#7e7e84"/><rect x="13" y="11" width="2" height="1" fill="#b58a88"/><rect x="1" y="12" width="1" height="1" fill="#7e7e84"/><rect x="2" y="12" width="1" height="1" fill="#a3a3ad"/><rect x="3" y="12" width="1" height="1" fill="#7e7e84"/><rect x="4" y="12" width="4" height="1" fill="#a3a3ad"/><rect x="8" y="12" width="2" height="1" fill="#b58a88"/><rect x="10" y="12" width="1" height="1" fill="#a3a3ad"/><rect x="11" y="12" width="1" height="1" fill="#7e7e84"/><rect x="14" y="12" width="2" height="1" fill="#b58a88"/><rect x="1" y="13" width="1" height="1" fill="#7e7e84"/><rect x="2" y="13" width="1" height="1" fill="#a3a3ad"/><rect x="3" y="13" width="1" height="1" fill="#7e7e84"/><rect x="4" y="13" width="3" height="1" fill="#a3a3ad"/><rect x="7" y="13" width="2" height="1" fill="#b58a88"/><rect x="9" y="13" width="1" height="1" fill="#7e7e84"/><rect x="10" y="13" width="1" height="1" fill="#a3a3ad"/><rect x="11" y="13" width="1" height="1" fill="#7e7e84"/><rect x="15" y="13" width="1" height="1" fill="#b58a88"/><rect x="2" y="14" width="6" height="1" fill="#7e7e84"/><rect x="9" y="14" width="2" height="1" fill="#7e7e84"/></svg>
<svg class="icon halo" style="left:7px;top:132px" width="14" height="14" viewBox="0 0 14 14" shape-rendering="crispEdges"><rect x="0" y="0" width="14" height="1" fill="#000000"/><rect x="0" y="1" width="1" height="1" fill="#000000"/><rect x="1" y="1" width="1" height="1" fill="#808000"/><rect x="2" y="1" width="1" height="1" fill="#000000"/><rect x="3" y="1" width="7" height="1" fill="#ffffff"/><rect x="10" y="1" width="1" height="1" fill="#000000"/><rect x="11" y="1" width="1" height="1" fill="#808000"/><rect x="12" y="1" width="1" height="1" fill="#ffffff"/><rect x="13" y="1" width="1" height="1" fill="#000000"/><rect x="0" y="2" width="1" height="1" fill="#000000"/><rect x="1" y="2" width="1" height="1" fill="#808000"/><rect x="2" y="2" width="1" height="1" fill="#000000"/><rect x="3" y="2" width="7" height="1" fill="#ffffff"/><rect x="10" y="2" width="1" height="1" fill="#000000"/><rect x="11" y="2" width="2" height="1" fill="#808000"/><rect x="13" y="2" width="1" height="1" fill="#000000"/><rect x="0" y="3" width="1" height="1" fill="#000000"/><rect x="1" y="3" width="1" height="1" fill="#808000"/><rect x="2" y="3" width="1" height="1" fill="#000000"/><rect x="3" y="3" width="7" height="1" fill="#ffffff"/><rect x="10" y="3" width="1" height="1" fill="#000000"/><rect x="11" y="3" width="2" height="1" fill="#808000"/><rect x="13" y="3" width="1" height="1" fill="#000000"/><rect x="0" y="4" width="1" height="1" fill="#000000"/><rect x="1" y="4" width="1" height="1" fill="#808000"/><rect x="2" y="4" width="1" height="1" fill="#000000"/><rect x="3" y="4" width="7" height="1" fill="#ffffff"/><rect x="10" y="4" width="1" height="1" fill="#000000"/><rect x="11" y="4" width="2" height="1" fill="#808000"/><rect x="13" y="4" width="1" height="1" fill="#000000"/><rect x="0" y="5" width="1" height="1" fill="#000000"/><rect x="1" y="5" width="1" height="1" fill="#808000"/><rect x="2" y="5" width="1" height="1" fill="#000000"/><rect x="3" y="5" width="7" height="1" fill="#ffffff"/><rect x="10" y="5" width="1" height="1" fill="#000000"/><rect x="11" y="5" width="2" height="1" fill="#808000"/><rect x="13" y="5" width="1" height="1" fill="#000000"/><rect x="0" y="6" width="1" height="1" fill="#000000"/><rect x="1" y="6" width="2" height="1" fill="#808000"/><rect x="3" y="6" width="7" height="1" fill="#000000"/><rect x="10" y="6" width="3" height="1" fill="#808000"/><rect x="13" y="6" width="1" height="1" fill="#000000"/><rect x="0" y="7" width="1" height="1" fill="#000000"/><rect x="1" y="7" width="12" height="1" fill="#808000"/><rect x="13" y="7" width="1" height="1" fill="#000000"/><rect x="0" y="8" width="1" height="1" fill="#000000"/><rect x="1" y="8" width="2" height="1" fill="#808000"/><rect x="3" y="8" width="9" height="1" fill="#000000"/><rect x="12" y="8" width="1" height="1" fill="#808000"/><rect x="13" y="8" width="1" height="1" fill="#000000"/><rect x="0" y="9" width="1" height="1" fill="#000000"/><rect x="1" y="9" width="2" height="1" fill="#808000"/><rect x="3" y="9" width="5" height="1" fill="#000000"/><rect x="8" y="9" width="2" height="1" fill="#ffffff"/><rect x="10" y="9" width="2" height="1" fill="#000000"/><rect x="12" y="9" width="1" height="1" fill="#808000"/><rect x="13" y="9" width="1" height="1" fill="#000000"/><rect x="0" y="10" width="1" height="1" fill="#000000"/><rect x="1" y="10" width="2" height="1" fill="#808000"/><rect x="3" y="10" width="5" height="1" fill="#000000"/><rect x="8" y="10" width="2" height="1" fill="#ffffff"/><rect x="10" y="10" width="2" height="1" fill="#000000"/><rect x="12" y="10" width="1" height="1" fill="#808000"/><rect x="13" y="10" width="1" height="1" fill="#000000"/><rect x="0" y="11" width="1" height="1" fill="#000000"/><rect x="1" y="11" width="2" height="1" fill="#808000"/><rect x="3" y="11" width="5" height="1" fill="#000000"/><rect x="8" y="11" width="2" height="1" fill="#ffffff"/><rect x="10" y="11" width="2" height="1" fill="#000000"/><rect x="12" y="11" width="1" height="1" fill="#808000"/><rect x="13" y="11" width="1" height="1" fill="#000000"/><rect x="0" y="12" width="1" height="1" fill="#000000"/><rect x="1" y="12" width="2" height="1" fill="#808000"/><rect x="3" y="12" width="9" height="1" fill="#000000"/><rect x="12" y="12" width="1" height="1" fill="#808000"/><rect x="13" y="12" width="1" height="1" fill="#000000"/><rect x="1" y="13" width="13" height="1" fill="#000000"/></svg>
<svg class="icon halo" style="left:6px;top:156px" width="16" height="15" viewBox="0 0 16 15" shape-rendering="crispEdges"><rect x="0" y="0" width="12" height="1" fill="#000080"/><rect x="0" y="1" width="12" height="1" fill="#000080"/><rect x="12" y="1" width="4" height="1" fill="#000000"/><rect x="0" y="2" width="1" height="1" fill="#000080"/><rect x="1" y="2" width="10" height="1" fill="#ffffff"/><rect x="11" y="2" width="1" height="1" fill="#000080"/><rect x="12" y="2" width="1" height="1" fill="#000000"/><rect x="13" y="2" width="1" height="1" fill="#808000"/><rect x="14" y="2" width="1" height="1" fill="#ffffff"/><rect x="15" y="2" width="1" height="1" fill="#000000"/><rect x="0" y="3" width="1" height="1" fill="#000080"/><rect x="1" y="3" width="10" height="1" fill="#ffffff"/><rect x="11" y="3" width="1" height="1" fill="#000080"/><rect x="12" y="3" width="1" height="1" fill="#000000"/><rect x="13" y="3" width="2" height="1" fill="#808000"/><rect x="15" y="3" width="1" height="1" fill="#000000"/><rect x="0" y="4" width="1" height="1" fill="#000080"/><rect x="1" y="4" width="10" height="1" fill="#ffffff"/><rect x="11" y="4" width="1" height="1" fill="#000080"/><rect x="12" y="4" width="1" height="1" fill="#000000"/><rect x="13" y="4" width="2" height="1" fill="#808000"/><rect x="15" y="4" width="1" height="1" fill="#000000"/><rect x="0" y="5" width="1" height="1" fill="#000080"/><rect x="1" y="5" width="10" height="1" fill="#ffffff"/><rect x="11" y="5" width="1" height="1" fill="#000080"/><rect x="12" y="5" width="1" height="1" fill="#000000"/><rect x="13" y="5" width="2" height="1" fill="#808000"/><rect x="15" y="5" width="1" height="1" fill="#000000"/><rect x="0" y="6" width="1" height="1" fill="#000080"/><rect x="1" y="6" width="6" height="1" fill="#ffffff"/><rect x="7" y="6" width="1" height="1" fill="#000000"/><rect x="8" y="6" width="1" height="1" fill="#ffffff"/><rect x="9" y="6" width="1" height="1" fill="#000000"/><rect x="10" y="6" width="1" height="1" fill="#ffffff"/><rect x="11" y="6" width="1" height="1" fill="#000080"/><rect x="12" y="6" width="1" height="1" fill="#000000"/><rect x="13" y="6" width="2" height="1" fill="#808000"/><rect x="15" y="6" width="1" height="1" fill="#000000"/><rect x="0" y="7" width="1" height="1" fill="#000080"/><rect x="1" y="7" width="10" height="1" fill="#ffffff"/><rect x="11" y="7" width="1" height="1" fill="#000080"/><rect x="12" y="7" width="1" height="1" fill="#000000"/><rect x="13" y="7" width="2" height="1" fill="#808000"/><rect x="15" y="7" width="1" height="1" fill="#000000"/><rect x="0" y="8" width="12" height="1" fill="#000080"/><rect x="12" y="8" width="3" height="1" fill="#808000"/><rect x="15" y="8" width="1" height="1" fill="#000000"/><rect x="2" y="9" width="1" height="1" fill="#000000"/><rect x="3" y="9" width="12" height="1" fill="#808000"/><rect x="15" y="9" width="1" height="1" fill="#000000"/><rect x="2" y="10" width="1" height="1" fill="#000000"/><rect x="3" y="10" width="2" height="1" fill="#808000"/><rect x="5" y="10" width="9" height="1" fill="#000000"/><rect x="14" y="10" width="1" height="1" fill="#808000"/><rect x="15" y="10" width="1" height="1" fill="#000000"/><rect x="2" y="11" width="1" height="1" fill="#000000"/><rect x="3" y="11" width="2" height="1" fill="#808000"/><rect x="5" y="11" width="5" height="1" fill="#000000"/><rect x="10" y="11" width="2" height="1" fill="#ffffff"/><rect x="12" y="11" width="2" height="1" fill="#000000"/><rect x="14" y="11" width="1" height="1" fill="#808000"/><rect x="15" y="11" width="1" height="1" fill="#000000"/><rect x="2" y="12" width="1" height="1" fill="#000000"/><rect x="3" y="12" width="2" height="1" fill="#808000"/><rect x="5" y="12" width="5" height="1" fill="#000000"/><rect x="10" y="12" width="2" height="1" fill="#ffffff"/><rect x="12" y="12" width="2" height="1" fill="#000000"/><rect x="14" y="12" width="1" height="1" fill="#808000"/><rect x="15" y="12" width="1" height="1" fill="#000000"/><rect x="2" y="13" width="1" height="1" fill="#000000"/><rect x="3" y="13" width="2" height="1" fill="#808000"/><rect x="5" y="13" width="5" height="1" fill="#000000"/><rect x="10" y="13" width="2" height="1" fill="#ffffff"/><rect x="12" y="13" width="2" height="1" fill="#000000"/><rect x="14" y="13" width="1" height="1" fill="#808000"/><rect x="15" y="13" width="1" height="1" fill="#000000"/><rect x="3" y="14" width="13" height="1" fill="#000000"/></svg>
<svg class="icon" style="left:10px;top:185px" width="10" height="9" viewBox="0 0 10 9" shape-rendering="crispEdges"><rect x="4" y="0" width="1" height="1" fill="#b3a29f"/><rect x="4" y="1" width="2" height="1" fill="#b3a29f"/><rect x="0" y="2" width="7" height="1" fill="#b3a29f"/><rect x="0" y="3" width="8" height="1" fill="#b3a29f"/><rect x="0" y="4" width="9" height="1" fill="#b3a29f"/><rect x="0" y="5" width="8" height="1" fill="#b3a29f"/><rect x="0" y="6" width="7" height="1" fill="#b3a29f"/><rect x="4" y="7" width="2" height="1" fill="#b3a29f"/><rect x="4" y="8" width="1" height="1" fill="#b3a29f"/></svg>
<svg class="icon" style="left:4px;top:203px" width="19" height="19" viewBox="0 0 19 19" shape-rendering="crispEdges"><rect x="4" y="3" width="1" height="1" fill="#a98a86"/><rect x="5" y="3" width="2" height="1" fill="#b3a29c"/><rect x="7" y="3" width="1" height="1" fill="#a98a86"/><rect x="4" y="4" width="1" height="1" fill="#a98a86"/><rect x="5" y="4" width="2" height="1" fill="#b3a29c"/><rect x="7" y="4" width="1" height="1" fill="#a98a86"/><rect x="4" y="5" width="1" height="1" fill="#a98a86"/><rect x="5" y="5" width="2" height="1" fill="#b3a29c"/><rect x="7" y="5" width="1" height="1" fill="#a98a86"/><rect x="4" y="6" width="1" height="1" fill="#a98a86"/><rect x="5" y="6" width="2" height="1" fill="#b3a29c"/><rect x="7" y="6" width="1" height="1" fill="#a98a86"/><rect x="2" y="7" width="3" height="1" fill="#a98a86"/><rect x="5" y="7" width="2" height="1" fill="#b3a29c"/><rect x="7" y="7" width="3" height="1" fill="#a98a86"/><rect x="3" y="8" width="1" height="1" fill="#a98a86"/><rect x="4" y="8" width="4" height="1" fill="#b3a29c"/><rect x="8" y="8" width="1" height="1" fill="#a98a86"/><rect x="11" y="8" width="3" height="1" fill="#858585"/><rect x="4" y="9" width="1" height="1" fill="#a98a86"/><rect x="5" y="9" width="2" height="1" fill="#b3a29c"/><rect x="7" y="9" width="1" height="1" fill="#a98a86"/><rect x="8" y="9" width="2" height="1" fill="#c4c0ba"/><rect x="10" y="9" width="4" height="1" fill="#858585"/><rect x="14" y="9" width="1" height="1" fill="#c4c0ba"/><rect x="5" y="10" width="1" height="1" fill="#a98a86"/><rect x="6" y="10" width="1" height="1" fill="#b3a29c"/><rect x="7" y="10" width="1" height="1" fill="#c4c0ba"/><rect x="8" y="10" width="3" height="1" fill="#a9a294"/><rect x="11" y="10" width="4" height="1" fill="#858585"/><rect x="15" y="10" width="1" height="1" fill="#a9a294"/><rect x="16" y="10" width="1" height="1" fill="#858585"/><rect x="5" y="11" width="1" height="1" fill="#b3a29c"/><rect x="6" y="11" width="1" height="1" fill="#c4c0ba"/><rect x="7" y="11" width="10" height="1" fill="#a9a294"/><rect x="17" y="11" width="1" height="1" fill="#858585"/><rect x="5" y="12" width="1" height="1" fill="#c4c0ba"/><rect x="6" y="12" width="12" height="1" fill="#a9a294"/><rect x="5" y="13" width="13" height="1" fill="#a9a294"/><rect x="5" y="14" width="13" height="1" fill="#a9a294"/><rect x="5" y="15" width="8" height="1" fill="#a9a294"/><rect x="13" y="15" width="3" height="1" fill="#cfcbc4"/><rect x="16" y="15" width="2" height="1" fill="#a9a294"/><rect x="5" y="16" width="13" height="1" fill="#a9a294"/><rect x="5" y="17" width="1" height="1" fill="#858585"/><rect x="6" y="17" width="11" height="1" fill="#a9a294"/><rect x="17" y="17" width="1" height="1" fill="#858585"/><rect x="6" y="18" width="11" height="1" fill="#858585"/></svg>
<svg class="icon halo" style="left:5px;top:338px" width="16" height="17" viewBox="0 0 16 17" shape-rendering="crispEdges"><rect x="3" y="1" width="7" height="1" fill="#000000"/><rect x="3" y="2" width="1" height="1" fill="#000000"/><rect x="4" y="2" width="5" height="1" fill="#ffffff"/><rect x="9" y="2" width="2" height="1" fill="#000000"/><rect x="3" y="3" width="1" height="1" fill="#000000"/><rect x="4" y="3" width="1" height="1" fill="#ffffff"/><rect x="5" y="3" width="3" height="1" fill="#0000ff"/><rect x="8" y="3" width="2" height="1" fill="#ffffff"/><rect x="10" y="3" width="5" height="1" fill="#000000"/><rect x="3" y="4" width="1" height="1" fill="#000000"/><rect x="4" y="4" width="7" height="1" fill="#ffffff"/><rect x="11" y="4" width="1" height="1" fill="#000000"/><rect x="12" y="4" width="1" height="1" fill="#ffffff"/><rect x="13" y="4" width="1" height="1" fill="#c0c0c0"/><rect x="14" y="4" width="1" height="1" fill="#ffffff"/><rect x="15" y="4" width="1" height="1" fill="#000000"/><rect x="2" y="5" width="10" height="1" fill="#000000"/><rect x="12" y="5" width="1" height="1" fill="#c0c0c0"/><rect x="13" y="5" width="1" height="1" fill="#ffffff"/><rect x="14" y="5" width="1" height="1" fill="#c0c0c0"/><rect x="15" y="5" width="1" height="1" fill="#000000"/><rect x="1" y="6" width="1" height="1" fill="#000000"/><rect x="2" y="6" width="10" height="1" fill="#ffffff"/><rect x="12" y="6" width="1" height="1" fill="#000000"/><rect x="13" y="6" width="1" height="1" fill="#ffffff"/><rect x="14" y="6" width="2" height="1" fill="#000000"/><rect x="1" y="7" width="12" height="1" fill="#000000"/><rect x="13" y="7" width="1" height="1" fill="#c0c0c0"/><rect x="14" y="7" width="1" height="1" fill="#ffffff"/><rect x="15" y="7" width="1" height="1" fill="#000000"/><rect x="1" y="8" width="1" height="1" fill="#000000"/><rect x="2" y="8" width="6" height="1" fill="#ffffff"/><rect x="8" y="8" width="3" height="1" fill="#ffff00"/><rect x="11" y="8" width="2" height="1" fill="#ffffff"/><rect x="13" y="8" width="1" height="1" fill="#000000"/><rect x="15" y="8" width="1" height="1" fill="#000000"/><rect x="2" y="9" width="12" height="1" fill="#000000"/><rect x="15" y="9" width="1" height="1" fill="#000000"/><rect x="3" y="10" width="1" height="1" fill="#000000"/><rect x="4" y="10" width="8" height="1" fill="#ffffff"/><rect x="12" y="10" width="1" height="1" fill="#000000"/><rect x="13" y="10" width="1" height="1" fill="#ffffff"/><rect x="14" y="10" width="1" height="1" fill="#000000"/><rect x="3" y="11" width="1" height="1" fill="#000000"/><rect x="4" y="11" width="1" height="1" fill="#ffffff"/><rect x="5" y="11" width="6" height="1" fill="#0000ff"/><rect x="11" y="11" width="1" height="1" fill="#ffffff"/><rect x="12" y="11" width="1" height="1" fill="#000000"/><rect x="13" y="11" width="1" height="1" fill="#ffffff"/><rect x="14" y="11" width="1" height="1" fill="#000000"/><rect x="3" y="12" width="1" height="1" fill="#000000"/><rect x="4" y="12" width="8" height="1" fill="#ffffff"/><rect x="12" y="12" width="1" height="1" fill="#000000"/><rect x="13" y="12" width="1" height="1" fill="#ffffff"/><rect x="14" y="12" width="1" height="1" fill="#000000"/><rect x="3" y="13" width="1" height="1" fill="#000000"/><rect x="4" y="13" width="1" height="1" fill="#ffffff"/><rect x="5" y="13" width="4" height="1" fill="#0000ff"/><rect x="9" y="13" width="1" height="1" fill="#ffffff"/><rect x="10" y="13" width="1" height="1" fill="#0000ff"/><rect x="11" y="13" width="1" height="1" fill="#ffffff"/><rect x="12" y="13" width="1" height="1" fill="#000000"/><rect x="13" y="13" width="1" height="1" fill="#ffffff"/><rect x="14" y="13" width="2" height="1" fill="#000000"/><rect x="3" y="14" width="1" height="1" fill="#000000"/><rect x="4" y="14" width="8" height="1" fill="#ffffff"/><rect x="12" y="14" width="1" height="1" fill="#000000"/><rect x="13" y="14" width="1" height="1" fill="#ffffff"/><rect x="14" y="14" width="2" height="1" fill="#000000"/><rect x="2" y="15" width="13" height="1" fill="#000000"/><rect x="1" y="16" width="3" height="1" fill="#000000"/><rect x="12" y="16" width="2" height="1" fill="#000000"/></svg>
<svg class="icon halo" style="left:5px;top:363px" width="16" height="17" viewBox="0 0 16 17" shape-rendering="crispEdges"><rect x="4" y="1" width="9" height="1" fill="#000000"/><rect x="3" y="2" width="1" height="1" fill="#000000"/><rect x="4" y="2" width="7" height="1" fill="#ffffff"/><rect x="11" y="2" width="1" height="1" fill="#000000"/><rect x="13" y="2" width="1" height="1" fill="#000000"/><rect x="2" y="3" width="1" height="1" fill="#000000"/><rect x="3" y="3" width="7" height="1" fill="#ffffff"/><rect x="10" y="3" width="1" height="1" fill="#000000"/><rect x="12" y="3" width="3" height="1" fill="#000000"/><rect x="1" y="4" width="11" height="1" fill="#000000"/><rect x="12" y="4" width="1" height="1" fill="#ffffff"/><rect x="13" y="4" width="1" height="1" fill="#c0c0c0"/><rect x="14" y="4" width="1" height="1" fill="#ffffff"/><rect x="15" y="4" width="1" height="1" fill="#000000"/><rect x="1" y="5" width="1" height="1" fill="#000000"/><rect x="2" y="5" width="10" height="1" fill="#ffffff"/><rect x="12" y="5" width="1" height="1" fill="#000000"/><rect x="13" y="5" width="1" height="1" fill="#c0c0c0"/><rect x="14" y="5" width="1" height="1" fill="#ffffff"/><rect x="15" y="5" width="1" height="1" fill="#000000"/><rect x="1" y="6" width="12" height="1" fill="#000000"/><rect x="13" y="6" width="1" height="1" fill="#ffffff"/><rect x="14" y="6" width="2" height="1" fill="#000000"/><rect x="1" y="7" width="1" height="1" fill="#000000"/><rect x="2" y="7" width="6" height="1" fill="#ffffff"/><rect x="8" y="7" width="3" height="1" fill="#ffff00"/><rect x="11" y="7" width="2" height="1" fill="#ffffff"/><rect x="13" y="7" width="1" height="1" fill="#000000"/><rect x="15" y="7" width="1" height="1" fill="#000000"/><rect x="2" y="8" width="12" height="1" fill="#000000"/><rect x="15" y="8" width="1" height="1" fill="#000000"/><rect x="3" y="9" width="1" height="1" fill="#000000"/><rect x="4" y="9" width="8" height="1" fill="#ffffff"/><rect x="12" y="9" width="1" height="1" fill="#000000"/><rect x="13" y="9" width="1" height="1" fill="#ffffff"/><rect x="14" y="9" width="1" height="1" fill="#000000"/><rect x="3" y="10" width="1" height="1" fill="#000000"/><rect x="4" y="10" width="3" height="1" fill="#ffffff"/><rect x="7" y="10" width="1" height="1" fill="#d8d8d8"/><rect x="8" y="10" width="4" height="1" fill="#ffffff"/><rect x="12" y="10" width="1" height="1" fill="#000000"/><rect x="13" y="10" width="1" height="1" fill="#ffffff"/><rect x="14" y="10" width="1" height="1" fill="#000000"/><rect x="3" y="11" width="1" height="1" fill="#000000"/><rect x="4" y="11" width="2" height="1" fill="#ffffff"/><rect x="6" y="11" width="1" height="1" fill="#d8d8d8"/><rect x="7" y="11" width="1" height="1" fill="#ffffff"/><rect x="8" y="11" width="2" height="1" fill="#d8d8d8"/><rect x="10" y="11" width="2" height="1" fill="#ffffff"/><rect x="12" y="11" width="1" height="1" fill="#000000"/><rect x="13" y="11" width="1" height="1" fill="#ffffff"/><rect x="14" y="11" width="1" height="1" fill="#000000"/><rect x="3" y="12" width="1" height="1" fill="#000000"/><rect x="4" y="12" width="2" height="1" fill="#ffffff"/><rect x="6" y="12" width="2" height="1" fill="#d8d8d8"/><rect x="8" y="12" width="1" height="1" fill="#ffffff"/><rect x="9" y="12" width="1" height="1" fill="#d8d8d8"/><rect x="10" y="12" width="2" height="1" fill="#ffffff"/><rect x="12" y="12" width="1" height="1" fill="#000000"/><rect x="13" y="12" width="1" height="1" fill="#ffffff"/><rect x="14" y="12" width="1" height="1" fill="#000000"/><rect x="3" y="13" width="1" height="1" fill="#000000"/><rect x="4" y="13" width="8" height="1" fill="#ffffff"/><rect x="12" y="13" width="1" height="1" fill="#000000"/><rect x="13" y="13" width="1" height="1" fill="#ffffff"/><rect x="14" y="13" width="2" height="1" fill="#000000"/><rect x="3" y="14" width="1" height="1" fill="#000000"/><rect x="4" y="14" width="8" height="1" fill="#ffffff"/><rect x="12" y="14" width="1" height="1" fill="#000000"/><rect x="13" y="14" width="1" height="1" fill="#ffffff"/><rect x="14" y="14" width="2" height="1" fill="#000000"/><rect x="2" y="15" width="13" height="1" fill="#000000"/><rect x="1" y="16" width="3" height="1" fill="#000000"/><rect x="12" y="16" width="2" height="1" fill="#000000"/></svg>
<svg class="icon halo" style="left:5px;top:392px" width="16" height="16" viewBox="0 0 16 16" shape-rendering="crispEdges"><rect x="4" y="1" width="6" height="1" fill="#000000"/><rect x="4" y="2" width="1" height="1" fill="#000000"/><rect x="5" y="2" width="4" height="1" fill="#ffffff"/><rect x="9" y="2" width="2" height="1" fill="#000000"/><rect x="4" y="3" width="1" height="1" fill="#000000"/><rect x="5" y="3" width="1" height="1" fill="#ffffff"/><rect x="6" y="3" width="3" height="1" fill="#0000ff"/><rect x="9" y="3" width="1" height="1" fill="#000000"/><rect x="10" y="3" width="1" height="1" fill="#ffffff"/><rect x="11" y="3" width="1" height="1" fill="#000000"/><rect x="4" y="4" width="1" height="1" fill="#000000"/><rect x="5" y="4" width="4" height="1" fill="#ffffff"/><rect x="9" y="4" width="3" height="1" fill="#000000"/><rect x="4" y="5" width="1" height="1" fill="#000000"/><rect x="5" y="5" width="1" height="1" fill="#ffffff"/><rect x="6" y="5" width="4" height="1" fill="#0000ff"/><rect x="10" y="5" width="1" height="1" fill="#ffffff"/><rect x="11" y="5" width="1" height="1" fill="#000000"/><rect x="4" y="6" width="1" height="1" fill="#000000"/><rect x="5" y="6" width="6" height="1" fill="#ffffff"/><rect x="11" y="6" width="4" height="1" fill="#000000"/><rect x="3" y="7" width="2" height="1" fill="#000000"/><rect x="5" y="7" width="1" height="1" fill="#ffffff"/><rect x="6" y="7" width="4" height="1" fill="#0000ff"/><rect x="10" y="7" width="1" height="1" fill="#ffffff"/><rect x="11" y="7" width="1" height="1" fill="#000000"/><rect x="12" y="7" width="1" height="1" fill="#ffffff"/><rect x="13" y="7" width="1" height="1" fill="#c0c0c0"/><rect x="14" y="7" width="1" height="1" fill="#ffffff"/><rect x="15" y="7" width="1" height="1" fill="#000000"/><rect x="2" y="8" width="1" height="1" fill="#000000"/><rect x="4" y="8" width="1" height="1" fill="#000000"/><rect x="5" y="8" width="6" height="1" fill="#ffffff"/><rect x="11" y="8" width="1" height="1" fill="#000000"/><rect x="12" y="8" width="1" height="1" fill="#c0c0c0"/><rect x="13" y="8" width="1" height="1" fill="#ffffff"/><rect x="14" y="8" width="1" height="1" fill="#c0c0c0"/><rect x="15" y="8" width="1" height="1" fill="#000000"/><rect x="1" y="9" width="1" height="1" fill="#000000"/><rect x="2" y="9" width="2" height="1" fill="#ffffff"/><rect x="4" y="9" width="1" height="1" fill="#000000"/><rect x="5" y="9" width="6" height="1" fill="#ffffff"/><rect x="11" y="9" width="1" height="1" fill="#000000"/><rect x="12" y="9" width="1" height="1" fill="#ffffff"/><rect x="13" y="9" width="1" height="1" fill="#c0c0c0"/><rect x="14" y="9" width="2" height="1" fill="#000000"/><rect x="1" y="10" width="7" height="1" fill="#000000"/><rect x="8" y="10" width="3" height="1" fill="#808080"/><rect x="11" y="10" width="2" height="1" fill="#000000"/><rect x="13" y="10" width="1" height="1" fill="#c0c0c0"/><rect x="14" y="10" width="1" height="1" fill="#ffffff"/><rect x="15" y="10" width="1" height="1" fill="#000000"/><rect x="1" y="11" width="1" height="1" fill="#000000"/><rect x="2" y="11" width="6" height="1" fill="#ffffff"/><rect x="8" y="11" width="3" height="1" fill="#ffff00"/><rect x="11" y="11" width="2" height="1" fill="#ffffff"/><rect x="13" y="11" width="3" height="1" fill="#000000"/><rect x="1" y="12" width="12" height="1" fill="#000000"/><rect x="13" y="12" width="1" height="1" fill="#ffffff"/><rect x="14" y="12" width="1" height="1" fill="#000000"/><rect x="2" y="13" width="2" height="1" fill="#000000"/><rect x="4" y="13" width="7" height="1" fill="#ffffff"/><rect x="11" y="13" width="3" height="1" fill="#000000"/><rect x="3" y="14" width="1" height="1" fill="#000000"/><rect x="4" y="14" width="7" height="1" fill="#ffffff"/><rect x="11" y="14" width="1" height="1" fill="#000000"/><rect x="2" y="15" width="9" height="1" fill="#000000"/></svg>
<svg class="icon halo" style="left:5px;top:417px" width="16" height="15" viewBox="0 0 16 15" shape-rendering="crispEdges"><rect x="6" y="1" width="8" height="1" fill="#000000"/><rect x="5" y="2" width="1" height="1" fill="#000000"/><rect x="6" y="2" width="7" height="1" fill="#ffffff"/><rect x="13" y="2" width="1" height="1" fill="#000000"/><rect x="4" y="3" width="1" height="1" fill="#000000"/><rect x="5" y="3" width="7" height="1" fill="#ffffff"/><rect x="12" y="3" width="1" height="1" fill="#000000"/><rect x="4" y="4" width="1" height="1" fill="#000000"/><rect x="5" y="4" width="2" height="1" fill="#ffffff"/><rect x="7" y="4" width="2" height="1" fill="#d8d8d8"/><rect x="9" y="4" width="3" height="1" fill="#ffffff"/><rect x="12" y="4" width="1" height="1" fill="#000000"/><rect x="3" y="5" width="1" height="1" fill="#000000"/><rect x="4" y="5" width="2" height="1" fill="#ffffff"/><rect x="6" y="5" width="1" height="1" fill="#d8d8d8"/><rect x="7" y="5" width="4" height="1" fill="#ffffff"/><rect x="11" y="5" width="4" height="1" fill="#000000"/><rect x="3" y="6" width="1" height="1" fill="#000000"/><rect x="4" y="6" width="6" height="1" fill="#ffffff"/><rect x="10" y="6" width="2" height="1" fill="#000000"/><rect x="12" y="6" width="1" height="1" fill="#ffffff"/><rect x="13" y="6" width="1" height="1" fill="#c0c0c0"/><rect x="14" y="6" width="1" height="1" fill="#ffffff"/><rect x="15" y="6" width="1" height="1" fill="#000000"/><rect x="2" y="7" width="9" height="1" fill="#000000"/><rect x="11" y="7" width="1" height="1" fill="#ffffff"/><rect x="12" y="7" width="1" height="1" fill="#c0c0c0"/><rect x="13" y="7" width="1" height="1" fill="#ffffff"/><rect x="14" y="7" width="1" height="1" fill="#c0c0c0"/><rect x="15" y="7" width="1" height="1" fill="#000000"/><rect x="1" y="8" width="1" height="1" fill="#000000"/><rect x="2" y="8" width="9" height="1" fill="#ffffff"/><rect x="11" y="8" width="1" height="1" fill="#000000"/><rect x="12" y="8" width="1" height="1" fill="#c0c0c0"/><rect x="13" y="8" width="1" height="1" fill="#ffffff"/><rect x="14" y="8" width="2" height="1" fill="#000000"/><rect x="1" y="9" width="11" height="1" fill="#000000"/><rect x="12" y="9" width="1" height="1" fill="#ffffff"/><rect x="13" y="9" width="1" height="1" fill="#c0c0c0"/><rect x="14" y="9" width="1" height="1" fill="#ffffff"/><rect x="15" y="9" width="1" height="1" fill="#000000"/><rect x="1" y="10" width="1" height="1" fill="#000000"/><rect x="2" y="10" width="6" height="1" fill="#ffffff"/><rect x="8" y="10" width="3" height="1" fill="#ffff00"/><rect x="11" y="10" width="2" height="1" fill="#ffffff"/><rect x="13" y="10" width="3" height="1" fill="#000000"/><rect x="1" y="11" width="1" height="1" fill="#000000"/><rect x="2" y="11" width="11" height="1" fill="#ffffff"/><rect x="13" y="11" width="2" height="1" fill="#000000"/><rect x="2" y="12" width="11" height="1" fill="#000000"/><rect x="13" y="12" width="1" height="1" fill="#ffffff"/><rect x="14" y="12" width="1" height="1" fill="#000000"/><rect x="2" y="13" width="1" height="1" fill="#000000"/><rect x="3" y="13" width="1" height="1" fill="#ffffff"/><rect x="4" y="13" width="1" height="1" fill="#000000"/><rect x="5" y="13" width="1" height="1" fill="#ffffff"/><rect x="6" y="13" width="1" height="1" fill="#000000"/><rect x="7" y="13" width="1" height="1" fill="#ffffff"/><rect x="8" y="13" width="1" height="1" fill="#000000"/><rect x="9" y="13" width="1" height="1" fill="#ffffff"/><rect x="10" y="13" width="1" height="1" fill="#000000"/><rect x="11" y="13" width="1" height="1" fill="#ffffff"/><rect x="12" y="13" width="2" height="1" fill="#000000"/><rect x="3" y="14" width="10" height="1" fill="#000000"/></svg>

<span class="t" style="transform:scaleX(0.9946);left:32px;top:24px">Новый</span>
<span class="t" style="transform:scaleX(0.9851);left:32px;top:49px">Открыть</span>
<span class="t" style="transform:scaleX(0.9920);left:32px;top:74px"><u>З</u>акрыть проект</span>
<span class="t" style="transform:scaleX(1.0270);left:198px;top:74px">Ctrl+W</span>
<span class="t dis" style="transform:scaleX(0.9891);left:32px;top:99px">Выйти из проекта Teamwork</span>
<span class="t" style="transform:scaleX(0.9467);left:32px;top:128px"><u>С</u>охранить</span>
<span class="t" style="transform:scaleX(0.9706);left:203px;top:128px">Ctrl+S</span>
<span class="t" style="transform:scaleX(0.9589);left:32px;top:153px">Сохранить <u>к</u>ак...</span>
<span class="t" style="transform:scaleX(1.0000);left:171px;top:153px">Ctrl+Shift+S</span>
<span class="t dis" style="transform:scaleX(0.9755);left:32px;top:178px"><u>П</u>ослать изменения</span>
<span class="t dis" style="transform:scaleX(0.9706);left:32px;top:203px">Создать пакет перемещения</span>
<span class="t" style="transform:scaleX(0.9836);left:32px;top:228px">Специальные операции</span>
<span class="t" style="transform:scaleX(0.9979);left:32px;top:257px">Внешний контент</span>
<span class="t" style="transform:scaleX(0.9984);left:32px;top:282px">Библиотеки и объекты</span>
<span class="t" style="transform:scaleX(0.9973);left:32px;top:307px">Информация</span>
<span class="t" style="transform:scaleX(0.9750);left:32px;top:336px">Параметры п<u>л</u>оттера...</span>
<span class="t" style="transform:scaleX(0.9574);left:32px;top:361px"><u>В</u>ывести на плоттер...</span>
<span class="t" style="transform:scaleX(0.9852);left:32px;top:390px">П<u>а</u>раметры печати...</span>
<span class="t" style="transform:scaleX(1.0154);left:170px;top:390px">Ctrl+Shift+P</span>
<span class="t" style="transform:scaleX(0.9551);left:32px;top:415px"><u>П</u>ечать...</span>
<span class="t" style="transform:scaleX(1.0000);left:202px;top:415px">Ctrl+P</span>
<span class="t" style="transform:scaleX(0.9250);left:32px;top:444px">В<u>ы</u>ход</span>
<span class="t" style="transform:scaleX(1.0286);left:200px;top:444px">Ctrl+Q</span>

<!-- SUBMENU1 -->
<div class="abs menu" id="m2" style="left:250px;top:278px;width:306px;height:243px"></div>
<div class="hl" style="left:253px;top:439px;width:299px;height:25px"></div>
<div class="sep" style="left:280px;top:332px;width:272px"></div>
<div class="sep" style="left:280px;top:386px;width:272px"></div>
<div class="sep" style="left:280px;top:490px;width:272px"></div>
<div class="arr w" style="left:544px;top:447px"></div>
<svg class="icon halo" style="left:255px;top:284px" width="19" height="17" viewBox="0 0 19 17" shape-rendering="crispEdges"><rect x="7" y="2" width="1" height="1" fill="#9a6a2a"/><rect x="5" y="3" width="5" height="1" fill="#9a6a2a"/><rect x="3" y="4" width="3" height="1" fill="#9a6a2a"/><rect x="6" y="4" width="1" height="1" fill="#c9a882"/><rect x="7" y="4" width="1" height="1" fill="#ffffff"/><rect x="8" y="4" width="1" height="1" fill="#c9a882"/><rect x="9" y="4" width="3" height="1" fill="#9a6a2a"/><rect x="2" y="5" width="11" height="1" fill="#9a6a2a"/><rect x="4" y="6" width="1" height="1" fill="#9a6a2a"/><rect x="6" y="6" width="1" height="1" fill="#9a6a2a"/><rect x="8" y="6" width="1" height="1" fill="#9a6a2a"/><rect x="10" y="6" width="1" height="1" fill="#9a6a2a"/><rect x="4" y="7" width="1" height="1" fill="#9a6a2a"/><rect x="6" y="7" width="1" height="1" fill="#9a6a2a"/><rect x="8" y="7" width="1" height="1" fill="#9a6a2a"/><rect x="10" y="7" width="1" height="1" fill="#9a6a2a"/><rect x="4" y="8" width="1" height="1" fill="#9a6a2a"/><rect x="6" y="8" width="1" height="1" fill="#9a6a2a"/><rect x="8" y="8" width="1" height="1" fill="#9a6a2a"/><rect x="10" y="8" width="1" height="1" fill="#9a6a2a"/><rect x="4" y="9" width="1" height="1" fill="#9a6a2a"/><rect x="6" y="9" width="1" height="1" fill="#9a6a2a"/><rect x="8" y="9" width="8" height="1" fill="#000080"/><rect x="3" y="10" width="5" height="1" fill="#9a6a2a"/><rect x="8" y="10" width="8" height="1" fill="#000080"/><rect x="2" y="11" width="6" height="1" fill="#9a6a2a"/><rect x="8" y="11" width="1" height="1" fill="#000080"/><rect x="9" y="11" width="6" height="1" fill="#ffffff"/><rect x="15" y="11" width="1" height="1" fill="#000080"/><rect x="8" y="12" width="1" height="1" fill="#000080"/><rect x="9" y="12" width="1" height="1" fill="#ffffff"/><rect x="10" y="12" width="1" height="1" fill="#000080"/><rect x="11" y="12" width="1" height="1" fill="#ffffff"/><rect x="12" y="12" width="2" height="1" fill="#000080"/><rect x="14" y="12" width="1" height="1" fill="#ffffff"/><rect x="15" y="12" width="1" height="1" fill="#000080"/><rect x="8" y="13" width="1" height="1" fill="#000080"/><rect x="9" y="13" width="6" height="1" fill="#ffffff"/><rect x="15" y="13" width="1" height="1" fill="#000080"/><rect x="8" y="14" width="1" height="1" fill="#000080"/><rect x="9" y="14" width="1" height="1" fill="#ffffff"/><rect x="10" y="14" width="1" height="1" fill="#000080"/><rect x="11" y="14" width="1" height="1" fill="#ffffff"/><rect x="12" y="14" width="2" height="1" fill="#000080"/><rect x="14" y="14" width="1" height="1" fill="#ffffff"/><rect x="15" y="14" width="1" height="1" fill="#000080"/><rect x="8" y="15" width="1" height="1" fill="#000080"/><rect x="9" y="15" width="6" height="1" fill="#ffffff"/><rect x="15" y="15" width="1" height="1" fill="#000080"/><rect x="8" y="16" width="8" height="1" fill="#000080"/></svg>
<svg class="icon halo" style="left:255px;top:338px" width="19" height="17" viewBox="0 0 19 17" shape-rendering="crispEdges"><rect x="7" y="1" width="7" height="1" fill="#000000"/><rect x="7" y="2" width="1" height="1" fill="#000000"/><rect x="8" y="2" width="5" height="1" fill="#ffffff"/><rect x="13" y="2" width="2" height="1" fill="#000000"/><rect x="7" y="3" width="1" height="1" fill="#000000"/><rect x="8" y="3" width="5" height="1" fill="#ffffff"/><rect x="13" y="3" width="1" height="1" fill="#000000"/><rect x="14" y="3" width="1" height="1" fill="#ffffff"/><rect x="15" y="3" width="1" height="1" fill="#000000"/><rect x="7" y="4" width="1" height="1" fill="#000000"/><rect x="8" y="4" width="5" height="1" fill="#ffffff"/><rect x="13" y="4" width="4" height="1" fill="#000000"/><rect x="7" y="5" width="1" height="1" fill="#000000"/><rect x="8" y="5" width="8" height="1" fill="#ffffff"/><rect x="16" y="5" width="1" height="1" fill="#000000"/><rect x="1" y="6" width="5" height="1" fill="#000000"/><rect x="7" y="6" width="1" height="1" fill="#000000"/><rect x="8" y="6" width="8" height="1" fill="#ffffff"/><rect x="16" y="6" width="1" height="1" fill="#000000"/><rect x="1" y="7" width="1" height="1" fill="#000000"/><rect x="2" y="7" width="3" height="1" fill="#ffffff"/><rect x="5" y="7" width="1" height="1" fill="#000000"/><rect x="7" y="7" width="1" height="1" fill="#000000"/><rect x="8" y="7" width="8" height="1" fill="#ffffff"/><rect x="16" y="7" width="1" height="1" fill="#000000"/><rect x="1" y="8" width="1" height="1" fill="#000000"/><rect x="2" y="8" width="3" height="1" fill="#ffffff"/><rect x="5" y="8" width="1" height="1" fill="#000000"/><rect x="7" y="8" width="1" height="1" fill="#000000"/><rect x="8" y="8" width="3" height="1" fill="#ffffff"/><rect x="11" y="8" width="3" height="1" fill="#ff0000"/><rect x="14" y="8" width="2" height="1" fill="#ffffff"/><rect x="16" y="8" width="1" height="1" fill="#000000"/><rect x="1" y="9" width="1" height="1" fill="#000000"/><rect x="2" y="9" width="3" height="1" fill="#ffffff"/><rect x="5" y="9" width="1" height="1" fill="#000000"/><rect x="7" y="9" width="1" height="1" fill="#000000"/><rect x="8" y="9" width="4" height="1" fill="#ffffff"/><rect x="12" y="9" width="2" height="1" fill="#ff0000"/><rect x="14" y="9" width="2" height="1" fill="#ffffff"/><rect x="16" y="9" width="1" height="1" fill="#000000"/><rect x="1" y="10" width="6" height="1" fill="#000000"/><rect x="8" y="10" width="3" height="1" fill="#ffffff"/><rect x="11" y="10" width="1" height="1" fill="#ff0000"/><rect x="12" y="10" width="1" height="1" fill="#ffffff"/><rect x="13" y="10" width="1" height="1" fill="#ff0000"/><rect x="14" y="10" width="2" height="1" fill="#ffffff"/><rect x="16" y="10" width="1" height="1" fill="#000000"/><rect x="1" y="11" width="1" height="1" fill="#000000"/><rect x="2" y="11" width="4" height="1" fill="#808080"/><rect x="6" y="11" width="2" height="1" fill="#000000"/><rect x="9" y="11" width="2" height="1" fill="#ff0000"/><rect x="11" y="11" width="5" height="1" fill="#ffffff"/><rect x="16" y="11" width="1" height="1" fill="#000000"/><rect x="1" y="12" width="2" height="1" fill="#000000"/><rect x="3" y="12" width="5" height="1" fill="#808080"/><rect x="8" y="12" width="1" height="1" fill="#000000"/><rect x="9" y="12" width="7" height="1" fill="#ffffff"/><rect x="16" y="12" width="1" height="1" fill="#000000"/><rect x="1" y="13" width="16" height="1" fill="#000000"/><rect x="1" y="14" width="2" height="1" fill="#000000"/><rect x="4" y="14" width="1" height="1" fill="#000000"/><rect x="7" y="14" width="1" height="1" fill="#000000"/><rect x="2" y="15" width="1" height="1" fill="#000000"/><rect x="7" y="15" width="1" height="1" fill="#000000"/><rect x="2" y="16" width="1" height="1" fill="#000000"/><rect x="7" y="16" width="1" height="1" fill="#000000"/></svg>
<svg class="icon halo" style="left:255px;top:363px" width="19" height="17" viewBox="0 0 19 17" shape-rendering="crispEdges"><rect x="1" y="1" width="7" height="1" fill="#000000"/><rect x="1" y="2" width="1" height="1" fill="#000000"/><rect x="2" y="2" width="5" height="1" fill="#ffffff"/><rect x="7" y="2" width="2" height="1" fill="#000000"/><rect x="1" y="3" width="1" height="1" fill="#000000"/><rect x="2" y="3" width="5" height="1" fill="#ffffff"/><rect x="7" y="3" width="1" height="1" fill="#000000"/><rect x="8" y="3" width="1" height="1" fill="#ffffff"/><rect x="9" y="3" width="1" height="1" fill="#000000"/><rect x="1" y="4" width="1" height="1" fill="#000000"/><rect x="2" y="4" width="5" height="1" fill="#ffffff"/><rect x="7" y="4" width="4" height="1" fill="#000000"/><rect x="1" y="5" width="1" height="1" fill="#000000"/><rect x="2" y="5" width="8" height="1" fill="#ffffff"/><rect x="1" y="6" width="1" height="1" fill="#000000"/><rect x="2" y="6" width="8" height="1" fill="#ffffff"/><rect x="10" y="6" width="5" height="1" fill="#000000"/><rect x="1" y="7" width="1" height="1" fill="#000000"/><rect x="2" y="7" width="3" height="1" fill="#ffffff"/><rect x="5" y="7" width="1" height="1" fill="#0000ff"/><rect x="6" y="7" width="4" height="1" fill="#ffffff"/><rect x="10" y="7" width="1" height="1" fill="#000000"/><rect x="11" y="7" width="3" height="1" fill="#ffffff"/><rect x="14" y="7" width="1" height="1" fill="#000000"/><rect x="1" y="8" width="1" height="1" fill="#000000"/><rect x="2" y="8" width="3" height="1" fill="#ffffff"/><rect x="5" y="8" width="1" height="1" fill="#0000ff"/><rect x="6" y="8" width="4" height="1" fill="#ffffff"/><rect x="10" y="8" width="1" height="1" fill="#000000"/><rect x="11" y="8" width="3" height="1" fill="#ffffff"/><rect x="14" y="8" width="1" height="1" fill="#000000"/><rect x="1" y="9" width="1" height="1" fill="#000000"/><rect x="2" y="9" width="4" height="1" fill="#ffffff"/><rect x="6" y="9" width="1" height="1" fill="#0000ff"/><rect x="7" y="9" width="1" height="1" fill="#ffffff"/><rect x="8" y="9" width="1" height="1" fill="#0000ff"/><rect x="9" y="9" width="1" height="1" fill="#ffffff"/><rect x="10" y="9" width="1" height="1" fill="#000000"/><rect x="11" y="9" width="3" height="1" fill="#ffffff"/><rect x="14" y="9" width="1" height="1" fill="#000000"/><rect x="1" y="10" width="1" height="1" fill="#000000"/><rect x="2" y="10" width="5" height="1" fill="#ffffff"/><rect x="7" y="10" width="2" height="1" fill="#0000ff"/><rect x="9" y="10" width="1" height="1" fill="#ffffff"/><rect x="10" y="10" width="6" height="1" fill="#000000"/><rect x="1" y="11" width="1" height="1" fill="#000000"/><rect x="2" y="11" width="4" height="1" fill="#ffffff"/><rect x="6" y="11" width="3" height="1" fill="#0000ff"/><rect x="9" y="11" width="1" height="1" fill="#ffffff"/><rect x="10" y="11" width="1" height="1" fill="#000000"/><rect x="11" y="11" width="4" height="1" fill="#808080"/><rect x="15" y="11" width="2" height="1" fill="#000000"/><rect x="1" y="12" width="1" height="1" fill="#000000"/><rect x="2" y="12" width="8" height="1" fill="#ffffff"/><rect x="11" y="12" width="1" height="1" fill="#000000"/><rect x="12" y="12" width="5" height="1" fill="#808080"/><rect x="17" y="12" width="1" height="1" fill="#000000"/><rect x="1" y="13" width="8" height="1" fill="#000000"/><rect x="10" y="13" width="8" height="1" fill="#000000"/><rect x="10" y="14" width="2" height="1" fill="#000000"/><rect x="13" y="14" width="1" height="1" fill="#000000"/><rect x="16" y="14" width="1" height="1" fill="#000000"/><rect x="11" y="15" width="1" height="1" fill="#000000"/><rect x="16" y="15" width="1" height="1" fill="#000000"/><rect x="11" y="16" width="1" height="1" fill="#000000"/><rect x="16" y="16" width="1" height="1" fill="#000000"/></svg>
<svg class="icon halo" style="left:255px;top:392px" width="19" height="17" viewBox="0 0 19 17" shape-rendering="crispEdges"><rect x="6" y="2" width="7" height="1" fill="#000000"/><rect x="6" y="3" width="1" height="1" fill="#000000"/><rect x="7" y="3" width="5" height="1" fill="#ffffff"/><rect x="12" y="3" width="2" height="1" fill="#000000"/><rect x="4" y="4" width="7" height="1" fill="#000000"/><rect x="11" y="4" width="1" height="1" fill="#ffffff"/><rect x="12" y="4" width="1" height="1" fill="#000000"/><rect x="13" y="4" width="1" height="1" fill="#ffffff"/><rect x="14" y="4" width="1" height="1" fill="#000000"/><rect x="4" y="5" width="1" height="1" fill="#000000"/><rect x="5" y="5" width="2" height="1" fill="#4a7ab8"/><rect x="7" y="5" width="1" height="1" fill="#ffffff"/><rect x="8" y="5" width="2" height="1" fill="#4a7ab8"/><rect x="10" y="5" width="1" height="1" fill="#000000"/><rect x="11" y="5" width="1" height="1" fill="#000000"/><rect x="12" y="5" width="4" height="1" fill="#000000"/><rect x="4" y="6" width="1" height="1" fill="#000000"/><rect x="5" y="6" width="2" height="1" fill="#4a7ab8"/><rect x="7" y="6" width="1" height="1" fill="#ffffff"/><rect x="8" y="6" width="2" height="1" fill="#4a7ab8"/><rect x="10" y="6" width="1" height="1" fill="#000000"/><rect x="11" y="6" width="4" height="1" fill="#ffffff"/><rect x="15" y="6" width="1" height="1" fill="#000000"/><rect x="4" y="7" width="1" height="1" fill="#000000"/><rect x="5" y="7" width="2" height="1" fill="#4a7ab8"/><rect x="7" y="7" width="1" height="1" fill="#ffffff"/><rect x="8" y="7" width="2" height="1" fill="#4a7ab8"/><rect x="10" y="7" width="1" height="1" fill="#000000"/><rect x="11" y="7" width="4" height="1" fill="#ffffff"/><rect x="15" y="7" width="1" height="1" fill="#000000"/><rect x="4" y="8" width="1" height="1" fill="#000000"/><rect x="5" y="8" width="2" height="1" fill="#4a7ab8"/><rect x="7" y="8" width="1" height="1" fill="#ffffff"/><rect x="8" y="8" width="2" height="1" fill="#4a7ab8"/><rect x="10" y="8" width="1" height="1" fill="#000000"/><rect x="11" y="8" width="4" height="1" fill="#ffffff"/><rect x="15" y="8" width="1" height="1" fill="#000000"/><rect x="4" y="9" width="8" height="1" fill="#000000"/><rect x="12" y="9" width="3" height="1" fill="#ffffff"/><rect x="15" y="9" width="1" height="1" fill="#000000"/><rect x="4" y="10" width="1" height="1" fill="#000000"/><rect x="5" y="10" width="7" height="1" fill="#808080"/><rect x="12" y="10" width="1" height="1" fill="#000000"/><rect x="13" y="10" width="2" height="1" fill="#ffffff"/><rect x="15" y="10" width="1" height="1" fill="#000000"/><rect x="4" y="11" width="3" height="1" fill="#000000"/><rect x="7" y="11" width="6" height="1" fill="#808080"/><rect x="13" y="11" width="1" height="1" fill="#000000"/><rect x="14" y="11" width="1" height="1" fill="#ffffff"/><rect x="15" y="11" width="1" height="1" fill="#000000"/><rect x="4" y="12" width="10" height="1" fill="#000000"/><rect x="14" y="12" width="1" height="1" fill="#ffffff"/><rect x="15" y="12" width="1" height="1" fill="#000000"/><rect x="4" y="13" width="2" height="1" fill="#000000"/><rect x="7" y="13" width="1" height="1" fill="#000000"/><rect x="8" y="13" width="1" height="1" fill="#ffffff"/><rect x="9" y="13" width="2" height="1" fill="#000000"/><rect x="11" y="13" width="2" height="1" fill="#ffffff"/><rect x="13" y="13" width="1" height="1" fill="#000000"/><rect x="14" y="13" width="1" height="1" fill="#ffffff"/><rect x="15" y="13" width="1" height="1" fill="#000000"/><rect x="4" y="14" width="2" height="1" fill="#000000"/><rect x="7" y="14" width="9" height="1" fill="#000000"/><rect x="5" y="15" width="1" height="1" fill="#000000"/><rect x="12" y="15" width="1" height="1" fill="#000000"/><rect x="5" y="16" width="1" height="1" fill="#000000"/><rect x="12" y="16" width="1" height="1" fill="#000000"/></svg>
<svg class="icon halo" style="left:255px;top:417px" width="19" height="16" viewBox="0 0 19 16" shape-rendering="crispEdges"><rect x="2" y="1" width="1" height="1" fill="#4a3c3c"/><rect x="7" y="1" width="1" height="1" fill="#4a3c3c"/><rect x="2" y="2" width="6" height="1" fill="#4a3c3c"/><rect x="2" y="3" width="1" height="1" fill="#4a3c3c"/><rect x="3" y="3" width="1" height="1" fill="#ffffff"/><rect x="4" y="3" width="1" height="1" fill="#4a3c3c"/><rect x="5" y="3" width="1" height="1" fill="#ffffff"/><rect x="6" y="3" width="2" height="1" fill="#4a3c3c"/><rect x="2" y="4" width="1" height="1" fill="#4a3c3c"/><rect x="3" y="4" width="1" height="1" fill="#ffffff"/><rect x="4" y="4" width="1" height="1" fill="#4a3c3c"/><rect x="5" y="4" width="1" height="1" fill="#ffffff"/><rect x="6" y="4" width="2" height="1" fill="#4a3c3c"/><rect x="2" y="5" width="1" height="1" fill="#4a3c3c"/><rect x="3" y="5" width="1" height="1" fill="#ffffff"/><rect x="4" y="5" width="1" height="1" fill="#4a3c3c"/><rect x="5" y="5" width="1" height="1" fill="#ffffff"/><rect x="6" y="5" width="2" height="1" fill="#4a3c3c"/><rect x="2" y="6" width="1" height="1" fill="#4a3c3c"/><rect x="3" y="6" width="1" height="1" fill="#ffffff"/><rect x="4" y="6" width="1" height="1" fill="#4a3c3c"/><rect x="5" y="6" width="1" height="1" fill="#ffffff"/><rect x="6" y="6" width="2" height="1" fill="#4a3c3c"/><rect x="2" y="7" width="1" height="1" fill="#4a3c3c"/><rect x="3" y="7" width="6" height="1" fill="#101010"/><rect x="2" y="8" width="1" height="1" fill="#4a3c3c"/><rect x="3" y="8" width="1" height="1" fill="#101010"/><rect x="4" y="8" width="5" height="1" fill="#c8c8c8"/><rect x="9" y="8" width="2" height="1" fill="#101010"/><rect x="2" y="9" width="1" height="1" fill="#4a3c3c"/><rect x="4" y="9" width="2" height="1" fill="#101010"/><rect x="6" y="9" width="5" height="1" fill="#c8c8c8"/><rect x="11" y="9" width="1" height="1" fill="#101010"/><rect x="2" y="10" width="1" height="1" fill="#4a3c3c"/><rect x="5" y="10" width="6" height="1" fill="#4a3c3c"/><rect x="12" y="10" width="2" height="1" fill="#1e8a4a"/><rect x="2" y="11" width="1" height="1" fill="#4a3c3c"/><rect x="5" y="11" width="1" height="1" fill="#4a3c3c"/><rect x="7" y="11" width="1" height="1" fill="#101010"/><rect x="12" y="11" width="2" height="1" fill="#1e8a4a"/><rect x="2" y="12" width="1" height="1" fill="#4a3c3c"/><rect x="5" y="12" width="1" height="1" fill="#4a3c3c"/><rect x="7" y="12" width="1" height="1" fill="#101010"/><rect x="10" y="12" width="5" height="1" fill="#1e8a4a"/><rect x="15" y="12" width="1" height="1" fill="#101010"/><rect x="5" y="13" width="1" height="1" fill="#4a3c3c"/><rect x="10" y="13" width="5" height="1" fill="#1e8a4a"/><rect x="15" y="13" width="1" height="1" fill="#101010"/><rect x="5" y="14" width="1" height="1" fill="#4a3c3c"/><rect x="12" y="14" width="2" height="1" fill="#1e8a4a"/><rect x="14" y="14" width="1" height="1" fill="#101010"/><rect x="5" y="15" width="1" height="1" fill="#4a3c3c"/><rect x="12" y="15" width="1" height="1" fill="#1e8a4a"/><rect x="13" y="15" width="2" height="1" fill="#101010"/></svg>
<svg class="icon" style="left:257px;top:444px" width="14" height="15" viewBox="0 0 14 15" shape-rendering="crispEdges"><rect x="0" y="0" width="14" height="1" fill="#000000"/><rect x="0" y="1" width="1" height="1" fill="#000000"/><rect x="1" y="1" width="1" height="1" fill="#808000"/><rect x="2" y="1" width="1" height="1" fill="#000000"/><rect x="3" y="1" width="7" height="1" fill="#c0defc"/><rect x="10" y="1" width="1" height="1" fill="#000000"/><rect x="11" y="1" width="1" height="1" fill="#808000"/><rect x="12" y="1" width="1" height="1" fill="#e8f2ff"/><rect x="13" y="1" width="1" height="1" fill="#000000"/><rect x="0" y="2" width="1" height="1" fill="#000000"/><rect x="1" y="2" width="1" height="1" fill="#808000"/><rect x="2" y="2" width="1" height="1" fill="#000000"/><rect x="3" y="2" width="7" height="1" fill="#c0defc"/><rect x="10" y="2" width="4" height="1" fill="#000000"/><rect x="0" y="3" width="1" height="1" fill="#000000"/><rect x="1" y="3" width="1" height="1" fill="#808000"/><rect x="2" y="3" width="1" height="1" fill="#000000"/><rect x="3" y="3" width="7" height="1" fill="#c0defc"/><rect x="10" y="3" width="1" height="1" fill="#000000"/><rect x="11" y="3" width="2" height="1" fill="#808000"/><rect x="13" y="3" width="1" height="1" fill="#000000"/><rect x="0" y="4" width="1" height="1" fill="#000000"/><rect x="1" y="4" width="1" height="1" fill="#808000"/><rect x="2" y="4" width="1" height="1" fill="#000000"/><rect x="3" y="4" width="7" height="1" fill="#c0defc"/><rect x="10" y="4" width="1" height="1" fill="#000000"/><rect x="11" y="4" width="2" height="1" fill="#808000"/><rect x="13" y="4" width="1" height="1" fill="#000000"/><rect x="0" y="5" width="1" height="1" fill="#000000"/><rect x="1" y="5" width="1" height="1" fill="#808000"/><rect x="2" y="5" width="1" height="1" fill="#000000"/><rect x="3" y="5" width="7" height="1" fill="#c0defc"/><rect x="10" y="5" width="1" height="1" fill="#000000"/><rect x="11" y="5" width="2" height="1" fill="#808000"/><rect x="13" y="5" width="1" height="1" fill="#000000"/><rect x="0" y="6" width="1" height="1" fill="#000000"/><rect x="1" y="6" width="1" height="1" fill="#808000"/><rect x="2" y="6" width="1" height="1" fill="#000000"/><rect x="3" y="6" width="7" height="1" fill="#c0defc"/><rect x="10" y="6" width="1" height="1" fill="#000000"/><rect x="11" y="6" width="2" height="1" fill="#808000"/><rect x="13" y="6" width="1" height="1" fill="#000000"/><rect x="0" y="7" width="1" height="1" fill="#000000"/><rect x="1" y="7" width="2" height="1" fill="#808000"/><rect x="3" y="7" width="7" height="1" fill="#000000"/><rect x="10" y="7" width="3" height="1" fill="#808000"/><rect x="13" y="7" width="1" height="1" fill="#000000"/><rect x="0" y="8" width="1" height="1" fill="#000000"/><rect x="1" y="8" width="12" height="1" fill="#808000"/><rect x="13" y="8" width="1" height="1" fill="#000000"/><rect x="0" y="9" width="1" height="1" fill="#000000"/><rect x="1" y="9" width="2" height="1" fill="#808000"/><rect x="3" y="9" width="9" height="1" fill="#000000"/><rect x="12" y="9" width="1" height="1" fill="#808000"/><rect x="13" y="9" width="1" height="1" fill="#000000"/><rect x="0" y="10" width="1" height="1" fill="#000000"/><rect x="1" y="10" width="2" height="1" fill="#808000"/><rect x="3" y="10" width="5" height="1" fill="#000000"/><rect x="8" y="10" width="2" height="1" fill="#e8f2ff"/><rect x="10" y="10" width="2" height="1" fill="#000000"/><rect x="12" y="10" width="1" height="1" fill="#808000"/><rect x="13" y="10" width="1" height="1" fill="#000000"/><rect x="0" y="11" width="1" height="1" fill="#000000"/><rect x="1" y="11" width="2" height="1" fill="#808000"/><rect x="3" y="11" width="5" height="1" fill="#000000"/><rect x="8" y="11" width="2" height="1" fill="#e8f2ff"/><rect x="10" y="11" width="2" height="1" fill="#000000"/><rect x="12" y="11" width="1" height="1" fill="#808000"/><rect x="13" y="11" width="1" height="1" fill="#000000"/><rect x="0" y="12" width="1" height="1" fill="#000000"/><rect x="1" y="12" width="2" height="1" fill="#808000"/><rect x="3" y="12" width="5" height="1" fill="#000000"/><rect x="8" y="12" width="2" height="1" fill="#e8f2ff"/><rect x="10" y="12" width="2" height="1" fill="#000000"/><rect x="12" y="12" width="1" height="1" fill="#808000"/><rect x="13" y="12" width="1" height="1" fill="#000000"/><rect x="0" y="13" width="1" height="1" fill="#000000"/><rect x="1" y="13" width="2" height="1" fill="#808000"/><rect x="3" y="13" width="5" height="1" fill="#000000"/><rect x="8" y="13" width="2" height="1" fill="#e8f2ff"/><rect x="10" y="13" width="2" height="1" fill="#000000"/><rect x="12" y="13" width="1" height="1" fill="#808000"/><rect x="13" y="13" width="1" height="1" fill="#000000"/><rect x="1" y="14" width="13" height="1" fill="#000000"/></svg>
<svg class="icon halo" style="left:255px;top:496px" width="19" height="17" viewBox="0 0 19 17" shape-rendering="crispEdges"><rect x="1" y="1" width="8" height="1" fill="#808080"/><rect x="1" y="2" width="1" height="1" fill="#808080"/><rect x="2" y="2" width="6" height="1" fill="#ffffff"/><rect x="8" y="2" width="1" height="1" fill="#808080"/><rect x="1" y="3" width="1" height="1" fill="#808080"/><rect x="2" y="3" width="1" height="1" fill="#ffffff"/><rect x="3" y="3" width="4" height="1" fill="#ff0000"/><rect x="7" y="3" width="1" height="1" fill="#ffffff"/><rect x="8" y="3" width="1" height="1" fill="#808080"/><rect x="1" y="4" width="1" height="1" fill="#808080"/><rect x="2" y="4" width="1" height="1" fill="#ffffff"/><rect x="3" y="4" width="1" height="1" fill="#ff0000"/><rect x="4" y="4" width="2" height="1" fill="#ffffff"/><rect x="6" y="4" width="1" height="1" fill="#ff0000"/><rect x="7" y="4" width="1" height="1" fill="#ffffff"/><rect x="8" y="4" width="1" height="1" fill="#808080"/><rect x="10" y="4" width="5" height="1" fill="#008000"/><rect x="1" y="5" width="1" height="1" fill="#808080"/><rect x="2" y="5" width="1" height="1" fill="#ffffff"/><rect x="3" y="5" width="4" height="1" fill="#ff0000"/><rect x="7" y="5" width="1" height="1" fill="#ffffff"/><rect x="8" y="5" width="1" height="1" fill="#808080"/><rect x="10" y="5" width="1" height="1" fill="#008000"/><rect x="11" y="5" width="1" height="1" fill="#ffffff"/><rect x="12" y="5" width="1" height="1" fill="#008000"/><rect x="13" y="5" width="1" height="1" fill="#ffffff"/><rect x="14" y="5" width="1" height="1" fill="#008000"/><rect x="1" y="6" width="1" height="1" fill="#808080"/><rect x="2" y="6" width="6" height="1" fill="#ffffff"/><rect x="8" y="6" width="1" height="1" fill="#808080"/><rect x="10" y="6" width="1" height="1" fill="#008000"/><rect x="11" y="6" width="1" height="1" fill="#ffffff"/><rect x="12" y="6" width="1" height="1" fill="#008000"/><rect x="13" y="6" width="1" height="1" fill="#ffffff"/><rect x="14" y="6" width="1" height="1" fill="#008000"/><rect x="1" y="7" width="3" height="1" fill="#808080"/><rect x="5" y="7" width="3" height="1" fill="#808080"/><rect x="10" y="7" width="1" height="1" fill="#008000"/><rect x="11" y="7" width="1" height="1" fill="#ffffff"/><rect x="12" y="7" width="1" height="1" fill="#008000"/><rect x="13" y="7" width="1" height="1" fill="#ffffff"/><rect x="14" y="7" width="1" height="1" fill="#008000"/><rect x="4" y="8" width="1" height="1" fill="#0000c8"/><rect x="10" y="8" width="1" height="1" fill="#008000"/><rect x="11" y="8" width="1" height="1" fill="#ffffff"/><rect x="12" y="8" width="1" height="1" fill="#008000"/><rect x="13" y="8" width="1" height="1" fill="#ffffff"/><rect x="14" y="8" width="1" height="1" fill="#008000"/><rect x="3" y="9" width="1" height="1" fill="#0090ff"/><rect x="4" y="9" width="1" height="1" fill="#0000c8"/><rect x="7" y="9" width="1" height="1" fill="#0000c8"/><rect x="10" y="9" width="6" height="1" fill="#008000"/><rect x="3" y="10" width="1" height="1" fill="#0090ff"/><rect x="4" y="10" width="1" height="1" fill="#0000c8"/><rect x="7" y="10" width="2" height="1" fill="#0000c8"/><rect x="10" y="10" width="1" height="1" fill="#008000"/><rect x="11" y="10" width="4" height="1" fill="#ffffff"/><rect x="15" y="10" width="2" height="1" fill="#008000"/><rect x="3" y="11" width="1" height="1" fill="#0090ff"/><rect x="4" y="11" width="1" height="1" fill="#0000c8"/><rect x="7" y="11" width="1" height="1" fill="#0090ff"/><rect x="8" y="11" width="2" height="1" fill="#0000c8"/><rect x="11" y="11" width="1" height="1" fill="#008000"/><rect x="12" y="11" width="4" height="1" fill="#ffffff"/><rect x="16" y="11" width="1" height="1" fill="#008000"/><rect x="3" y="12" width="1" height="1" fill="#0090ff"/><rect x="4" y="12" width="3" height="1" fill="#0000c8"/><rect x="7" y="12" width="2" height="1" fill="#0090ff"/><rect x="9" y="12" width="2" height="1" fill="#0000c8"/><rect x="11" y="12" width="6" height="1" fill="#008000"/><rect x="4" y="13" width="5" height="1" fill="#0090ff"/><rect x="9" y="13" width="1" height="1" fill="#0000c8"/><rect x="10" y="13" width="4" height="1" fill="#008000"/><rect x="16" y="13" width="1" height="1" fill="#008000"/><rect x="7" y="14" width="1" height="1" fill="#0090ff"/><rect x="8" y="14" width="2" height="1" fill="#0000c8"/><rect x="11" y="14" width="1" height="1" fill="#008000"/><rect x="13" y="14" width="1" height="1" fill="#008000"/><rect x="16" y="14" width="1" height="1" fill="#008000"/><rect x="7" y="15" width="2" height="1" fill="#0000c8"/><rect x="11" y="15" width="1" height="1" fill="#008000"/><rect x="16" y="15" width="1" height="1" fill="#008000"/><rect x="7" y="16" width="1" height="1" fill="#0000c8"/><rect x="11" y="16" width="1" height="1" fill="#008000"/><rect x="16" y="16" width="1" height="1" fill="#008000"/></svg>
<svg class="icon" style="left:255px;top:467px" width="19" height="19" viewBox="0 0 19 19">
<defs><radialGradient id="gg" cx="0.38" cy="0.3" r="0.75"><stop offset="0" stop-color="#e8f4ff"/><stop offset="0.45" stop-color="#7cc0ff"/><stop offset="1" stop-color="#2a7ae8"/></radialGradient></defs>
<circle cx="9" cy="8.6" r="7.4" fill="url(#gg)" stroke="#1858c0" stroke-width="1"/>
<path d="M11.5 5.2 L17.6 11.6 L13.2 11.6 L13.2 16.2 L10 16.2 L10 11.6 L5.4 11.6 Z" fill="#2a8a50" stroke="#fff" stroke-width="0.9"/>
<path d="M13.2 11.2 H17.4 M12.9 11.4 V15.9 H10.2" stroke="#2a1420" stroke-width="0.8" fill="none"/>
<rect x="14" y="13" width="1" height="1" fill="#2060d0"/>
</svg>

<span class="t" style="transform:scaleX(1.0023);left:282px;top:282px">Менед<u>ж</u>ер библиотек...</span>
<span class="t" style="transform:scaleX(0.9884);left:282px;top:307px"><u>У</u>правление библиотеками сервера BIM...</span>
<span class="t" style="transform:scaleX(0.9767);left:282px;top:336px">Создать контейнер...</span>
<span class="t" style="transform:scaleX(0.9940);left:282px;top:361px">Извлечь контейнер...</span>
<span class="t" style="transform:scaleX(1.0149);left:282px;top:390px"><u>Н</u>овый объект...</span>
<span class="t" style="transform:scaleX(1.0031);left:282px;top:415px">Открыть <u>о</u>бъект...</span>
<span class="t" style="transform:scaleX(1.0303);left:468px;top:415px">Ctrl+Shift+O</span>
<span class="t" style="transform:scaleX(0.9763);left:282px;top:440px">Сохранить выбранное как...</span>
<span class="t" style="transform:scaleX(0.9584);left:282px;top:465px">Выгрузить объект GDL...</span>
<span class="t" style="transform:scaleX(0.9893);left:282px;top:494px">Импорт блоков из DXF/DWG</span>

<!-- SUBMENU2 -->
<div class="abs menu" id="m3" style="left:550px;top:436px;width:220px;height:170px"></div>
<div class="hl" style="left:553px;top:489px;width:214px;height:25px"></div>
<div class="sep" style="left:580px;top:540px;width:186px"></div>
<svg class="icon halo" style="left:555px;top:442px" width="19" height="17" viewBox="0 0 19 17" shape-rendering="crispEdges"><rect x="4" y="1" width="1" height="1" fill="#34348a"/><rect x="12" y="1" width="1" height="1" fill="#000000"/><rect x="4" y="2" width="1" height="1" fill="#34348a"/><rect x="5" y="2" width="8" height="1" fill="#000000"/><rect x="4" y="3" width="1" height="1" fill="#34348a"/><rect x="5" y="3" width="1" height="1" fill="#000000"/><rect x="6" y="3" width="1" height="1" fill="#ffffff"/><rect x="7" y="3" width="1" height="1" fill="#000000"/><rect x="8" y="3" width="2" height="1" fill="#ffffff"/><rect x="10" y="3" width="1" height="1" fill="#000000"/><rect x="11" y="3" width="1" height="1" fill="#ffffff"/><rect x="12" y="3" width="1" height="1" fill="#000000"/><rect x="4" y="4" width="1" height="1" fill="#34348a"/><rect x="5" y="4" width="1" height="1" fill="#000000"/><rect x="6" y="4" width="1" height="1" fill="#ffffff"/><rect x="7" y="4" width="1" height="1" fill="#000000"/><rect x="8" y="4" width="2" height="1" fill="#ffffff"/><rect x="10" y="4" width="1" height="1" fill="#000000"/><rect x="11" y="4" width="1" height="1" fill="#ffffff"/><rect x="12" y="4" width="1" height="1" fill="#000000"/><rect x="4" y="5" width="1" height="1" fill="#34348a"/><rect x="5" y="5" width="1" height="1" fill="#000000"/><rect x="6" y="5" width="1" height="1" fill="#ffffff"/><rect x="7" y="5" width="1" height="1" fill="#000000"/><rect x="8" y="5" width="2" height="1" fill="#ffffff"/><rect x="10" y="5" width="1" height="1" fill="#000000"/><rect x="11" y="5" width="1" height="1" fill="#ffffff"/><rect x="12" y="5" width="1" height="1" fill="#000000"/><rect x="4" y="6" width="1" height="1" fill="#34348a"/><rect x="5" y="6" width="1" height="1" fill="#000000"/><rect x="6" y="6" width="1" height="1" fill="#ffffff"/><rect x="7" y="6" width="1" height="1" fill="#000000"/><rect x="8" y="6" width="2" height="1" fill="#ffffff"/><rect x="10" y="6" width="1" height="1" fill="#000000"/><rect x="11" y="6" width="1" height="1" fill="#ffffff"/><rect x="12" y="6" width="1" height="1" fill="#000000"/><rect x="4" y="7" width="1" height="1" fill="#34348a"/><rect x="5" y="7" width="1" height="1" fill="#000000"/><rect x="6" y="7" width="1" height="1" fill="#ffffff"/><rect x="7" y="7" width="1" height="1" fill="#000000"/><rect x="8" y="7" width="2" height="1" fill="#ffffff"/><rect x="10" y="7" width="1" height="1" fill="#000000"/><rect x="11" y="7" width="1" height="1" fill="#ffffff"/><rect x="12" y="7" width="1" height="1" fill="#000000"/><rect x="4" y="8" width="1" height="1" fill="#34348a"/><rect x="5" y="8" width="9" height="1" fill="#000000"/><rect x="4" y="9" width="1" height="1" fill="#34348a"/><rect x="5" y="9" width="9" height="1" fill="#9c9cf0"/><rect x="14" y="9" width="2" height="1" fill="#000000"/><rect x="4" y="10" width="2" height="1" fill="#34348a"/><rect x="6" y="10" width="9" height="1" fill="#7070c0"/><rect x="15" y="10" width="1" height="1" fill="#000000"/><rect x="4" y="11" width="1" height="1" fill="#34348a"/><rect x="5" y="11" width="1" height="1" fill="#000000"/><rect x="6" y="11" width="1" height="1" fill="#34348a"/><rect x="7" y="11" width="8" height="1" fill="#7070c0"/><rect x="15" y="11" width="1" height="1" fill="#000000"/><rect x="4" y="12" width="1" height="1" fill="#34348a"/><rect x="6" y="12" width="1" height="1" fill="#34348a"/><rect x="7" y="12" width="9" height="1" fill="#000000"/><rect x="4" y="13" width="1" height="1" fill="#34348a"/><rect x="6" y="13" width="1" height="1" fill="#34348a"/><rect x="10" y="13" width="1" height="1" fill="#000000"/><rect x="15" y="13" width="1" height="1" fill="#000000"/><rect x="4" y="14" width="1" height="1" fill="#34348a"/><rect x="6" y="14" width="1" height="1" fill="#34348a"/><rect x="15" y="14" width="1" height="1" fill="#000000"/><rect x="6" y="15" width="1" height="1" fill="#34348a"/><rect x="15" y="15" width="1" height="1" fill="#000000"/><rect x="6" y="16" width="1" height="1" fill="#34348a"/><rect x="15" y="16" width="1" height="1" fill="#000000"/></svg>
<svg class="icon halo" style="left:555px;top:467px" width="19" height="17" viewBox="0 0 19 17" shape-rendering="crispEdges"><rect x="5" y="2" width="9" height="1" fill="#000000"/><rect x="5" y="3" width="1" height="1" fill="#000000"/><rect x="6" y="3" width="7" height="1" fill="#a0a0f8"/><rect x="13" y="3" width="1" height="1" fill="#000000"/><rect x="14" y="3" width="1" height="1" fill="#20206a"/><rect x="5" y="4" width="1" height="1" fill="#000000"/><rect x="6" y="4" width="1" height="1" fill="#a0a0f8"/><rect x="7" y="4" width="6" height="1" fill="#7c7ccc"/><rect x="13" y="4" width="1" height="1" fill="#000000"/><rect x="14" y="4" width="1" height="1" fill="#20206a"/><rect x="5" y="5" width="1" height="1" fill="#000000"/><rect x="6" y="5" width="1" height="1" fill="#a0a0f8"/><rect x="7" y="5" width="6" height="1" fill="#7c7ccc"/><rect x="13" y="5" width="1" height="1" fill="#000000"/><rect x="14" y="5" width="1" height="1" fill="#20206a"/><rect x="5" y="6" width="1" height="1" fill="#000000"/><rect x="6" y="6" width="1" height="1" fill="#a0a0f8"/><rect x="7" y="6" width="6" height="1" fill="#7c7ccc"/><rect x="13" y="6" width="1" height="1" fill="#000000"/><rect x="14" y="6" width="1" height="1" fill="#20206a"/><rect x="5" y="7" width="1" height="1" fill="#000000"/><rect x="6" y="7" width="1" height="1" fill="#a0a0f8"/><rect x="7" y="7" width="6" height="1" fill="#7c7ccc"/><rect x="13" y="7" width="1" height="1" fill="#000000"/><rect x="14" y="7" width="1" height="1" fill="#20206a"/><rect x="5" y="8" width="2" height="1" fill="#000000"/><rect x="7" y="8" width="6" height="1" fill="#7c7ccc"/><rect x="13" y="8" width="1" height="1" fill="#000000"/><rect x="14" y="8" width="1" height="1" fill="#20206a"/><rect x="5" y="9" width="3" height="1" fill="#000000"/><rect x="8" y="9" width="5" height="1" fill="#7c7ccc"/><rect x="13" y="9" width="1" height="1" fill="#000000"/><rect x="14" y="9" width="1" height="1" fill="#20206a"/><rect x="5" y="10" width="2" height="1" fill="#000000"/><rect x="7" y="10" width="6" height="1" fill="#7c7ccc"/><rect x="13" y="10" width="1" height="1" fill="#000000"/><rect x="14" y="10" width="1" height="1" fill="#20206a"/><rect x="5" y="11" width="1" height="1" fill="#000000"/><rect x="6" y="11" width="1" height="1" fill="#a0a0f8"/><rect x="7" y="11" width="6" height="1" fill="#7c7ccc"/><rect x="13" y="11" width="1" height="1" fill="#000000"/><rect x="14" y="11" width="1" height="1" fill="#20206a"/><rect x="5" y="12" width="1" height="1" fill="#000000"/><rect x="6" y="12" width="7" height="1" fill="#7c7ccc"/><rect x="13" y="12" width="1" height="1" fill="#000000"/><rect x="14" y="12" width="1" height="1" fill="#20206a"/><rect x="5" y="13" width="1" height="1" fill="#000000"/><rect x="6" y="13" width="7" height="1" fill="#7c7ccc"/><rect x="13" y="13" width="1" height="1" fill="#000000"/><rect x="14" y="13" width="1" height="1" fill="#20206a"/><rect x="5" y="14" width="1" height="1" fill="#000000"/><rect x="6" y="14" width="7" height="1" fill="#7c7ccc"/><rect x="13" y="14" width="1" height="1" fill="#000000"/><rect x="14" y="14" width="1" height="1" fill="#20206a"/><rect x="5" y="15" width="1" height="1" fill="#000000"/><rect x="6" y="15" width="7" height="1" fill="#7c7ccc"/><rect x="13" y="15" width="1" height="1" fill="#000000"/><rect x="14" y="15" width="1" height="1" fill="#20206a"/><rect x="3" y="16" width="14" height="1" fill="#000000"/></svg>
<svg class="icon" style="left:555px;top:492px" width="19" height="16" viewBox="0 0 19 16" shape-rendering="crispEdges"><rect x="3" y="2" width="12" height="1" fill="#7a6ac8"/><rect x="3" y="3" width="1" height="1" fill="#7a6ac8"/><rect x="4" y="3" width="11" height="1" fill="#000000"/><rect x="3" y="4" width="1" height="1" fill="#7a6ac8"/><rect x="4" y="4" width="1" height="1" fill="#000000"/><rect x="5" y="4" width="4" height="1" fill="#ffffff"/><rect x="9" y="4" width="1" height="1" fill="#000000"/><rect x="10" y="4" width="4" height="1" fill="#ffffff"/><rect x="14" y="4" width="1" height="1" fill="#000000"/><rect x="3" y="5" width="1" height="1" fill="#7a6ac8"/><rect x="4" y="5" width="1" height="1" fill="#000000"/><rect x="5" y="5" width="4" height="1" fill="#ffffff"/><rect x="9" y="5" width="1" height="1" fill="#000000"/><rect x="10" y="5" width="1" height="1" fill="#c8c0ff"/><rect x="11" y="5" width="3" height="1" fill="#ffffff"/><rect x="14" y="5" width="1" height="1" fill="#000000"/><rect x="3" y="6" width="1" height="1" fill="#7a6ac8"/><rect x="4" y="6" width="1" height="1" fill="#000000"/><rect x="5" y="6" width="4" height="1" fill="#ffffff"/><rect x="9" y="6" width="1" height="1" fill="#000000"/><rect x="10" y="6" width="1" height="1" fill="#c8c0ff"/><rect x="11" y="6" width="3" height="1" fill="#ffffff"/><rect x="14" y="6" width="1" height="1" fill="#000000"/><rect x="3" y="7" width="1" height="1" fill="#7a6ac8"/><rect x="4" y="7" width="1" height="1" fill="#000000"/><rect x="5" y="7" width="4" height="1" fill="#ffffff"/><rect x="9" y="7" width="1" height="1" fill="#000000"/><rect x="10" y="7" width="4" height="1" fill="#ffffff"/><rect x="14" y="7" width="1" height="1" fill="#000000"/><rect x="3" y="8" width="1" height="1" fill="#7a6ac8"/><rect x="4" y="8" width="11" height="1" fill="#000000"/><rect x="3" y="9" width="1" height="1" fill="#7a6ac8"/><rect x="4" y="9" width="1" height="1" fill="#000000"/><rect x="5" y="9" width="2" height="1" fill="#c8c0ff"/><rect x="7" y="9" width="2" height="1" fill="#ffffff"/><rect x="9" y="9" width="1" height="1" fill="#000000"/><rect x="10" y="9" width="2" height="1" fill="#c8c0ff"/><rect x="12" y="9" width="2" height="1" fill="#ffffff"/><rect x="14" y="9" width="1" height="1" fill="#000000"/><rect x="3" y="10" width="1" height="1" fill="#7a6ac8"/><rect x="4" y="10" width="1" height="1" fill="#000000"/><rect x="5" y="10" width="4" height="1" fill="#ffffff"/><rect x="9" y="10" width="1" height="1" fill="#000000"/><rect x="10" y="10" width="1" height="1" fill="#c8c0ff"/><rect x="11" y="10" width="3" height="1" fill="#ffffff"/><rect x="14" y="10" width="1" height="1" fill="#000000"/><rect x="3" y="11" width="1" height="1" fill="#7a6ac8"/><rect x="4" y="11" width="1" height="1" fill="#000000"/><rect x="5" y="11" width="4" height="1" fill="#ffffff"/><rect x="9" y="11" width="1" height="1" fill="#000000"/><rect x="10" y="11" width="1" height="1" fill="#c8c0ff"/><rect x="11" y="11" width="3" height="1" fill="#ffffff"/><rect x="14" y="11" width="1" height="1" fill="#000000"/><rect x="3" y="12" width="1" height="1" fill="#7a6ac8"/><rect x="4" y="12" width="1" height="1" fill="#000000"/><rect x="5" y="12" width="4" height="1" fill="#ffffff"/><rect x="9" y="12" width="1" height="1" fill="#000000"/><rect x="10" y="12" width="4" height="1" fill="#ffffff"/><rect x="14" y="12" width="1" height="1" fill="#000000"/><rect x="3" y="13" width="1" height="1" fill="#7a6ac8"/><rect x="4" y="13" width="11" height="1" fill="#000000"/><rect x="3" y="14" width="13" height="1" fill="#000000"/><rect x="4" y="15" width="13" height="1" fill="#2a1a5a"/></svg>
<svg class="icon halo" style="left:555px;top:517px" width="19" height="17" viewBox="0 0 19 17" shape-rendering="crispEdges"><rect x="1" y="2" width="14" height="1" fill="#000000"/><rect x="1" y="3" width="1" height="1" fill="#000000"/><rect x="2" y="3" width="11" height="1" fill="#ffffe1"/><rect x="13" y="3" width="4" height="1" fill="#000000"/><rect x="1" y="4" width="1" height="1" fill="#000000"/><rect x="2" y="4" width="1" height="1" fill="#ffffe1"/><rect x="3" y="4" width="6" height="1" fill="#000000"/><rect x="9" y="4" width="1" height="1" fill="#ffffe1"/><rect x="10" y="4" width="3" height="1" fill="#000000"/><rect x="13" y="4" width="1" height="1" fill="#ffffe1"/><rect x="14" y="4" width="1" height="1" fill="#000000"/><rect x="15" y="4" width="1" height="1" fill="#ffffff"/><rect x="16" y="4" width="1" height="1" fill="#000000"/><rect x="1" y="5" width="1" height="1" fill="#000000"/><rect x="2" y="5" width="1" height="1" fill="#ffffe1"/><rect x="3" y="5" width="6" height="1" fill="#000000"/><rect x="9" y="5" width="5" height="1" fill="#ffffe1"/><rect x="14" y="5" width="3" height="1" fill="#000000"/><rect x="1" y="6" width="1" height="1" fill="#000000"/><rect x="2" y="6" width="3" height="1" fill="#ffffe1"/><rect x="5" y="6" width="2" height="1" fill="#000000"/><rect x="7" y="6" width="3" height="1" fill="#ffffe1"/><rect x="10" y="6" width="3" height="1" fill="#000000"/><rect x="13" y="6" width="1" height="1" fill="#ffffe1"/><rect x="14" y="6" width="1" height="1" fill="#000000"/><rect x="15" y="6" width="1" height="1" fill="#808000"/><rect x="16" y="6" width="1" height="1" fill="#000000"/><rect x="1" y="7" width="1" height="1" fill="#000000"/><rect x="2" y="7" width="3" height="1" fill="#ffffe1"/><rect x="5" y="7" width="2" height="1" fill="#000000"/><rect x="7" y="7" width="7" height="1" fill="#ffffe1"/><rect x="14" y="7" width="1" height="1" fill="#000000"/><rect x="15" y="7" width="1" height="1" fill="#808000"/><rect x="16" y="7" width="1" height="1" fill="#000000"/><rect x="1" y="8" width="1" height="1" fill="#000000"/><rect x="2" y="8" width="3" height="1" fill="#ffffe1"/><rect x="5" y="8" width="2" height="1" fill="#000000"/><rect x="7" y="8" width="3" height="1" fill="#ffffe1"/><rect x="10" y="8" width="3" height="1" fill="#000000"/><rect x="13" y="8" width="1" height="1" fill="#ffffe1"/><rect x="14" y="8" width="1" height="1" fill="#000000"/><rect x="15" y="8" width="1" height="1" fill="#808000"/><rect x="16" y="8" width="1" height="1" fill="#000000"/><rect x="1" y="9" width="1" height="1" fill="#000000"/><rect x="2" y="9" width="11" height="1" fill="#ffffe1"/><rect x="13" y="9" width="2" height="1" fill="#000000"/><rect x="15" y="9" width="1" height="1" fill="#808000"/><rect x="16" y="9" width="1" height="1" fill="#000000"/><rect x="1" y="10" width="13" height="1" fill="#000000"/><rect x="14" y="10" width="2" height="1" fill="#808000"/><rect x="16" y="10" width="1" height="1" fill="#000000"/><rect x="3" y="11" width="1" height="1" fill="#000000"/><rect x="4" y="11" width="12" height="1" fill="#808000"/><rect x="16" y="11" width="1" height="1" fill="#000000"/><rect x="3" y="12" width="1" height="1" fill="#000000"/><rect x="4" y="12" width="2" height="1" fill="#808000"/><rect x="6" y="12" width="9" height="1" fill="#000000"/><rect x="15" y="12" width="1" height="1" fill="#808000"/><rect x="16" y="12" width="1" height="1" fill="#000000"/><rect x="3" y="13" width="1" height="1" fill="#000000"/><rect x="4" y="13" width="2" height="1" fill="#808000"/><rect x="6" y="13" width="5" height="1" fill="#000000"/><rect x="11" y="13" width="2" height="1" fill="#ffffff"/><rect x="13" y="13" width="2" height="1" fill="#000000"/><rect x="15" y="13" width="1" height="1" fill="#808000"/><rect x="16" y="13" width="1" height="1" fill="#000000"/><rect x="3" y="14" width="1" height="1" fill="#000000"/><rect x="4" y="14" width="2" height="1" fill="#808000"/><rect x="6" y="14" width="5" height="1" fill="#000000"/><rect x="11" y="14" width="2" height="1" fill="#ffffff"/><rect x="13" y="14" width="2" height="1" fill="#000000"/><rect x="15" y="14" width="1" height="1" fill="#808000"/><rect x="16" y="14" width="1" height="1" fill="#000000"/><rect x="3" y="15" width="1" height="1" fill="#000000"/><rect x="4" y="15" width="2" height="1" fill="#808000"/><rect x="6" y="15" width="5" height="1" fill="#000000"/><rect x="11" y="15" width="2" height="1" fill="#ffffff"/><rect x="13" y="15" width="2" height="1" fill="#000000"/><rect x="15" y="15" width="1" height="1" fill="#808000"/><rect x="16" y="15" width="1" height="1" fill="#000000"/><rect x="4" y="16" width="13" height="1" fill="#000000"/></svg>

<span class="t" style="transform:scaleX(0.9860);left:582px;top:440px">Объект...</span>
<span class="t" style="transform:scaleX(0.9614);left:582px;top:465px">Дверь...</span>
<span class="t" style="transform:scaleX(1.0079);left:582px;top:490px">Окно...</span>
<span class="t" style="transform:scaleX(1.0026);left:582px;top:515px">Заголовок чертежа...</span>
<span class="t" style="transform:scaleX(0.9686);left:582px;top:544px">Дверь шкафа...</span>
<span class="t" style="transform:scaleX(1.0019);left:582px;top:569px">Колпачок навесной стены...</span>


<svg class="abs" style="left:727px;top:504px" width="18" height="24" viewBox="-2 -2 18 24">
<path d="M0.5 0.9 V15.9 L4 12.6 L6.9 18.7 L9.4 17.6 L6.6 11.6 L11.2 11.6 Z" fill="#fff" stroke="#0a0a1a" stroke-width="1.05" stroke-linejoin="miter"/>
</svg>


</body></html>
